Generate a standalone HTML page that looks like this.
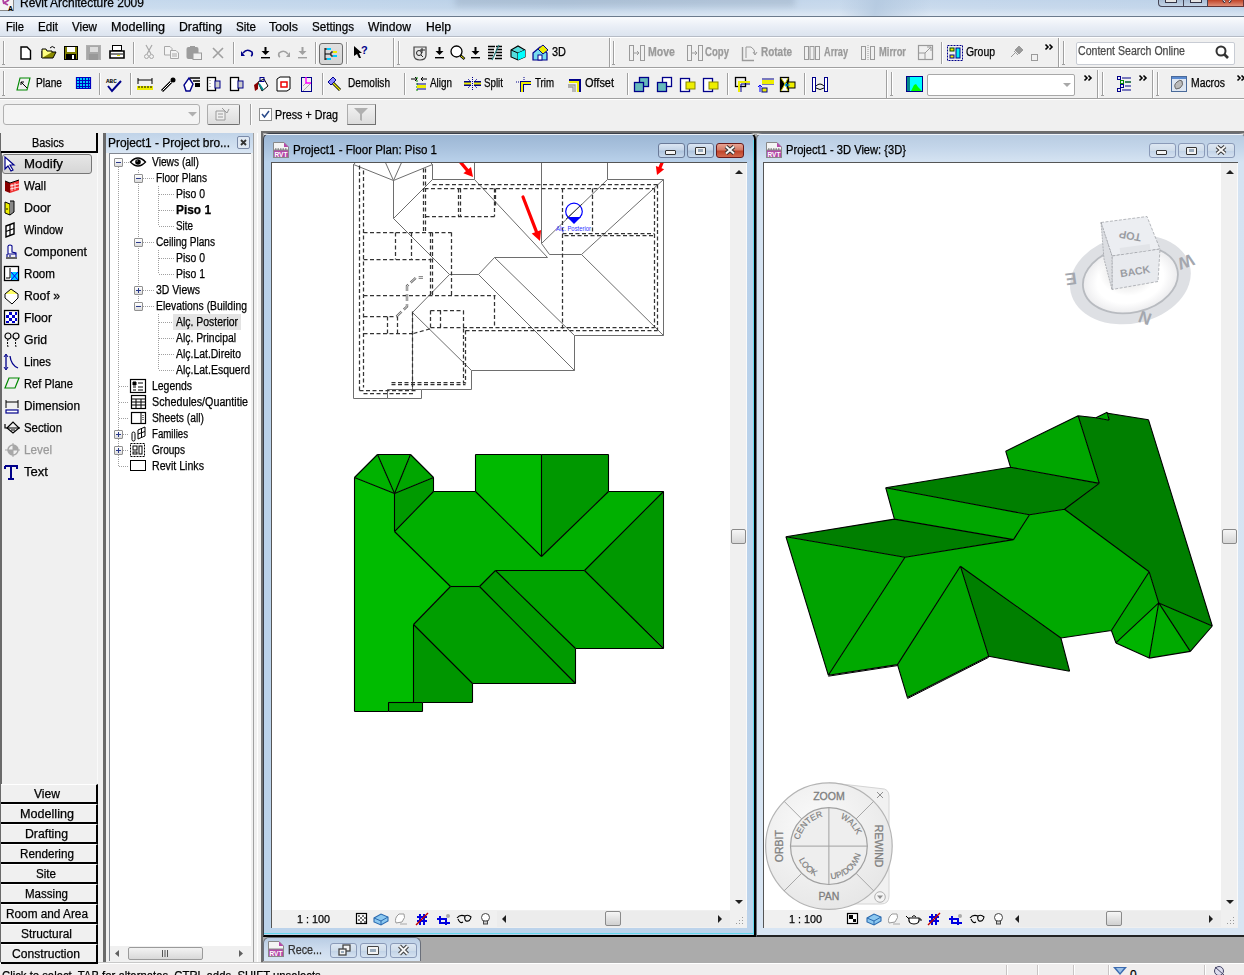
<!DOCTYPE html>
<html><head><meta charset="utf-8">
<style>
*{box-sizing:border-box;margin:0;padding:0}
html,body{width:1244px;height:975px;overflow:hidden;background:#f0f0f0;font-family:"Liberation Sans",sans-serif;font-size:12px;color:#000;position:relative}
.a{position:absolute}
.t{position:absolute;white-space:nowrap;line-height:14px;-webkit-text-stroke:0.25px currentColor}
svg{position:absolute;overflow:visible}
</style></head><body>
<div class="a" style="left:0px;top:0px;width:1244px;height:16px;background:linear-gradient(90deg,#c9dbee 0%,#bfd4ea 30%,#b9cfe6 45%,#c6d8ec 70%,#bcd1e8 100%)"></div>
<div class="a" style="left:455px;top:-4px;width:340px;height:11px;background:#8a9cb0;filter:blur(3px);opacity:0.35"></div>
<div class="a" style="left:0px;top:0px;width:1244px;height:16px;background:linear-gradient(180deg,rgba(255,255,255,0) 0%,rgba(255,255,255,0.1) 50%,rgba(255,255,255,0.45) 100%)"></div>
<div class="a" style="left:840px;top:0px;width:90px;height:16px;background:linear-gradient(100deg,transparent 0%,#aec4dc 40%,transparent 100%);opacity:0.7"></div>
<div class="t" style="left:20px;top:-4px;font-size:12px;color:#000;font-weight:normal;transform-origin:0 50%;transform:scaleX(0.999);">Revit Architecture 2009</div>
<div class="a" style="left:0px;top:0px;width:14px;height:11px;background:#f4f4f4;border-right:1px solid #888;border-bottom:1px solid #888"></div>
<svg style="left:0px;top:0px;" width="14" height="11" viewBox="0 0 14 11"><path d="M3 0 L4 4 M4 3 L9 0 M4 3 L8 5" stroke="#b040a0" stroke-width="1.8"/><text x="8" y="10.5" font-size="7" font-family="Liberation Sans" font-weight="bold">A</text></svg>
<div class="a" style="left:1158px;top:0px;width:26px;height:7px;background:linear-gradient(#a8bcd4,#c4d4e6);border:1px solid #445;border-top:none;border-radius:0 0 0 4px"></div>
<div class="a" style="left:1184px;top:0px;width:24px;height:7px;background:linear-gradient(#a8bcd4,#c4d4e6);border:1px solid #445;border-top:none;border-left:none"></div>
<div class="a" style="left:1208px;top:0px;width:36px;height:7px;background:linear-gradient(#c04428,#e0907a);border:1px solid #633;border-top:none;border-left:none"></div>
<div class="a" style="left:1165px;top:0px;width:12px;height:3px;background:#e4e4e4;border:1px solid #334;border-top:none;border-radius:0 0 1px 1px"></div>
<div class="a" style="left:1190px;top:0px;width:12px;height:3px;background:#e4e4e4;border:1px solid #334;border-top:none"></div>
<svg style="left:1222px;top:0px;" width="10" height="3" viewBox="0 0 10 3"><path d="M1 0 L3 2.5 M9 0 L7 2.5" stroke="#334" stroke-width="2.2"/><path d="M1.5 0 L3 2 M8.5 0 L7 2" stroke="#fff" stroke-width="1"/></svg>
<div class="a" style="left:0px;top:16px;width:1244px;height:1px;background:#6b7a8c"></div>
<div class="a" style="left:0px;top:17px;width:1244px;height:19px;background:linear-gradient(180deg,#fafbfd 0%,#e9eef6 50%,#dce4ef 100%)"></div>
<div class="a" style="left:0px;top:36px;width:1244px;height:1px;background:#b6bcc6"></div>
<div class="t" style="left:6px;top:20px;font-size:12px;color:#000;font-weight:normal;transform-origin:0 50%;transform:scaleX(0.931);">File</div>
<div class="t" style="left:38px;top:20px;font-size:12px;color:#000;font-weight:normal;transform-origin:0 50%;transform:scaleX(0.967);">Edit</div>
<div class="t" style="left:72px;top:20px;font-size:12px;color:#000;font-weight:normal;transform-origin:0 50%;transform:scaleX(0.969);">View</div>
<div class="t" style="left:111px;top:20px;font-size:12px;color:#000;font-weight:normal;transform-origin:0 50%;transform:scaleX(1.051);">Modelling</div>
<div class="t" style="left:179px;top:20px;font-size:12px;color:#000;font-weight:normal;transform-origin:0 50%;transform:scaleX(1.023);">Drafting</div>
<div class="t" style="left:236px;top:20px;font-size:12px;color:#000;font-weight:normal;transform-origin:0 50%;transform:scaleX(0.967);">Site</div>
<div class="t" style="left:269px;top:20px;font-size:12px;color:#000;font-weight:normal;transform-origin:0 50%;transform:scaleX(1.035);">Tools</div>
<div class="t" style="left:312px;top:20px;font-size:12px;color:#000;font-weight:normal;transform-origin:0 50%;transform:scaleX(0.969);">Settings</div>
<div class="t" style="left:368px;top:20px;font-size:12px;color:#000;font-weight:normal;transform-origin:0 50%;transform:scaleX(1.007);">Window</div>
<div class="t" style="left:426px;top:20px;font-size:12px;color:#000;font-weight:normal;transform-origin:0 50%;transform:scaleX(1.013);">Help</div>
<div class="a" style="left:0px;top:37px;width:1244px;height:1px;background:#fff"></div>
<div class="a" style="left:0px;top:67px;width:1244px;height:1px;background:#a0a0a0"></div>
<div class="a" style="left:0px;top:68px;width:1244px;height:1px;background:#fff"></div>
<div class="a" style="left:0px;top:98px;width:1244px;height:1px;background:#a0a0a0"></div>
<div class="a" style="left:0px;top:99px;width:1244px;height:1px;background:#fff"></div>
<div class="a" style="left:0px;top:962px;width:1244px;height:1px;background:#c8c8c8"></div>
<div class="a" style="left:0px;top:963px;width:1244px;height:1px;background:#ffffff"></div>
<div class="a" style="left:0px;top:964px;width:1244px;height:11px;background:#f0eeee"></div>
<div class="a" style="left:1006px;top:965px;width:1px;height:10px;background:#c8c4c4"></div>
<div class="a" style="left:1007px;top:965px;width:1px;height:10px;background:#fff"></div>
<div class="a" style="left:1037px;top:965px;width:1px;height:10px;background:#c8c4c4"></div>
<div class="a" style="left:1038px;top:965px;width:1px;height:10px;background:#fff"></div>
<div class="a" style="left:1073px;top:965px;width:1px;height:10px;background:#c8c4c4"></div>
<div class="a" style="left:1074px;top:965px;width:1px;height:10px;background:#fff"></div>
<div class="a" style="left:1108px;top:965px;width:1px;height:10px;background:#c8c4c4"></div>
<div class="a" style="left:1109px;top:965px;width:1px;height:10px;background:#fff"></div>
<div class="a" style="left:1204px;top:965px;width:1px;height:10px;background:#c8c4c4"></div>
<div class="a" style="left:1205px;top:965px;width:1px;height:10px;background:#fff"></div>
<svg style="left:1113px;top:967px;" width="15" height="8" viewBox="0 0 15 8"><path d="M0 0 H14 L7 8 Z" fill="#3a6ab0"/><path d="M3 1 H11 L7 6 Z" fill="#9ac0e8"/></svg>
<div class="t" style="left:1130px;top:968px;font-size:12px;color:#000;font-weight:normal;">0</div>
<svg style="left:1214px;top:966px;" width="11" height="9" viewBox="0 0 11 9"><circle cx="5" cy="5" r="4.5" fill="#dde" stroke="#446"/><path d="M1 1 L10 9" stroke="#446"/></svg>
<div class="t" style="left:2px;top:969px;font-size:12px;color:#000;font-weight:normal;transform-origin:0 50%;transform:scaleX(0.942);">Click to select, TAB for alternates, CTRL adds, SHIFT unselects.</div>
<div class="a" style="left:3px;top:41px;width:1px;height:24px;background:#a0a0a0"></div>
<div class="a" style="left:4px;top:41px;width:1px;height:24px;background:#fff"></div>
<div class="a" style="left:2px;top:64px;width:3px;height:1px;background:#a0a0a0"></div>
<svg style="left:20px;top:46px;" width="12" height="14" viewBox="0 0 12 14"><path d="M1 1 H7 L10.5 4.5 V13 H1 Z" fill="#fff" stroke="#000" stroke-width="1.4"/></svg>
<svg style="left:41px;top:45px;" width="16" height="15" viewBox="0 0 16 15"><path d="M1 6 V13 H12 L15 7 H4 L1 13" fill="#8a8a00" stroke="#000" stroke-width="1"/><path d="M1 13 V4 H5 L6 6 H11 V7" fill="#ffff80" stroke="#000" stroke-width="1"/><path d="M9 3 Q11 0 14 3" stroke="#000" fill="none"/></svg>
<svg style="left:64px;top:46px;" width="14" height="14" viewBox="0 0 14 14"><rect x="0.5" y="0.5" width="13" height="13" fill="#808000" stroke="#000"/><rect x="3" y="1" width="8" height="5" fill="#fff"/><rect x="2" y="8" width="10" height="6" fill="#000"/><rect x="8" y="9" width="2" height="4" fill="#fff"/></svg>
<svg style="left:86px;top:45px;" width="16" height="16" viewBox="0 0 16 16"><rect x="0.5" y="0.5" width="14" height="14" fill="#a8a8a8" stroke="#b0b0b0"/><rect x="4" y="2" width="8" height="5" fill="#ddd"/><rect x="3" y="9" width="9" height="6" fill="#999"/></svg>
<svg style="left:109px;top:45px;" width="16" height="15" viewBox="0 0 16 15"><rect x="3.5" y="0.5" width="9" height="5" fill="#fff" stroke="#000"/><path d="M1 6 H15 V13 H1 Z" fill="#fff" stroke="#000" stroke-width="1.6"/><path d="M2 9 H14" stroke="#000"/><rect x="8" y="10" width="3" height="1" fill="#dd0"/></svg>
<div class="a" style="left:133px;top:42px;width:1px;height:22px;background:#a0a0a0"></div>
<div class="a" style="left:134px;top:42px;width:1px;height:22px;background:#fff"></div>
<svg style="left:144px;top:45px;" width="10" height="15" viewBox="0 0 10 15"><path d="M2 0 L7 9 M8 0 L3 9" stroke="#a8a8a8" stroke-width="1.2"/><circle cx="2.5" cy="11.5" r="2" fill="none" stroke="#a8a8a8"/><circle cx="7.5" cy="11.5" r="2" fill="none" stroke="#a8a8a8"/></svg>
<svg style="left:164px;top:46px;" width="15" height="13" viewBox="0 0 15 13"><path d="M0.5 0.5 H6 L8 2.5 V9 H0.5 Z" fill="#f4f4f4" stroke="#a8a8a8"/><path d="M6.5 4.5 H12 L14.5 7 V12.5 H6.5 Z" fill="#f4f4f4" stroke="#a8a8a8"/><path d="M8 8 H13 M8 10 H13" stroke="#a8a8a8"/></svg>
<svg style="left:186px;top:45px;" width="16" height="15" viewBox="0 0 16 15"><rect x="0.5" y="2" width="12" height="12" rx="2" fill="#9c9c9c"/><rect x="7" y="8" width="8.5" height="6.5" fill="#f0f0f0" stroke="#9c9c9c"/><rect x="4" y="1" width="5" height="3" fill="#9c9c9c"/></svg>
<svg style="left:212px;top:47px;" width="12" height="12" viewBox="0 0 12 12"><path d="M1 1 L11 11 M11 1 L1 11" stroke="#a0a0a0" stroke-width="1.6"/></svg>
<div class="a" style="left:233px;top:42px;width:1px;height:22px;background:#a0a0a0"></div>
<div class="a" style="left:234px;top:42px;width:1px;height:22px;background:#fff"></div>
<svg style="left:241px;top:48px;" width="13" height="9" viewBox="0 0 13 9"><path d="M2 5 Q6 0 11 4 Q12 7 10 8" stroke="#00008a" stroke-width="1.6" fill="none"/><path d="M0 3 L4 8 L0 8 Z" fill="#00008a"/></svg>
<svg style="left:261px;top:47px;" width="9" height="11" viewBox="0 0 9 11"><path d="M4.5 0 V6" stroke="#000" stroke-width="2"/><path d="M0.5 4 L4.5 8 L8.5 4 Z" fill="#000"/><rect x="0" y="10" width="9" height="1.4" fill="#000"/></svg>
<svg style="left:278px;top:49px;" width="12" height="8" viewBox="0 0 12 8"><path d="M10 5 Q6 0 1 4 Q0 7 2 8" stroke="#a0a0a0" stroke-width="1.6" fill="none"/><path d="M12 3 L8 8 L12 8 Z" fill="#a0a0a0"/></svg>
<svg style="left:298px;top:47px;" width="9" height="11" viewBox="0 0 9 11"><path d="M4.5 0 V6" stroke="#a0a0a0" stroke-width="2"/><path d="M0.5 4 L4.5 8 L8.5 4 Z" fill="#a0a0a0"/><rect x="0" y="10" width="9" height="1.4" fill="#a0a0a0"/></svg>
<div class="a" style="left:315px;top:42px;width:1px;height:22px;background:#a0a0a0"></div>
<div class="a" style="left:316px;top:42px;width:1px;height:22px;background:#fff"></div>
<div class="a" style="left:319px;top:43px;width:24px;height:22px;background:linear-gradient(#e0e0e0,#d4d4d4);border:1px solid #6d6d6d;border-radius:3px"></div>
<svg style="left:323px;top:47px;" width="16" height="14" viewBox="0 0 16 14"><path d="M2 1 V13 M2 2 H6 M2 7 H8 M2 12 H6 M8 5 V9 M8 5 H10 M8 9 H10" stroke="#000" fill="none"/><rect x="4" y="1" width="4" height="2" fill="#0cf"/><rect x="10" y="4" width="4" height="2" fill="#ee0"/><rect x="10" y="8" width="4" height="2" fill="#0cf"/><rect x="4" y="11" width="4" height="2" fill="#0cf"/></svg>
<div class="a" style="left:346px;top:42px;width:1px;height:22px;background:#a0a0a0"></div>
<div class="a" style="left:347px;top:42px;width:1px;height:22px;background:#fff"></div>
<svg style="left:354px;top:45px;" width="16" height="14" viewBox="0 0 16 14"><path d="M0 1 L8 8 L5 8 L7 13 L5 13 L3 9 L0 11 Z" fill="#000"/><text x="7" y="9" font-size="11" font-weight="bold" fill="#00008a" font-family="Liberation Sans">?</text></svg>
<div class="a" style="left:393px;top:38px;width:1px;height:29px;background:#a0a0a0"></div>
<div class="a" style="left:394px;top:38px;width:1px;height:29px;background:#fff"></div>
<div class="a" style="left:398px;top:41px;width:1px;height:24px;background:#a0a0a0"></div>
<div class="a" style="left:399px;top:41px;width:1px;height:24px;background:#fff"></div>
<div class="a" style="left:397px;top:64px;width:3px;height:1px;background:#a0a0a0"></div>
<svg style="left:412px;top:45px;" width="16" height="16" viewBox="0 0 16 16"><path d="M2 2 H14 V10 Q14 15 8 15 Q2 15 2 10 Z" fill="#e8e8e8" stroke="#444" stroke-width="1.2"/><circle cx="7" cy="8" r="2.5" fill="none" stroke="#222"/><path d="M9 10 L11 12 M10 3 V8 M8 5 H13" stroke="#222"/></svg>
<svg style="left:435px;top:47px;" width="9" height="11" viewBox="0 0 9 11"><path d="M4.5 0 V6" stroke="#000" stroke-width="2"/><path d="M0.5 4 L4.5 8 L8.5 4 Z" fill="#000"/><rect x="0" y="10" width="9" height="1.4" fill="#000"/></svg>
<svg style="left:450px;top:45px;" width="16" height="15" viewBox="0 0 16 15"><circle cx="6.5" cy="6.5" r="5.5" fill="#fff" stroke="#000" stroke-width="1.3"/><path d="M10.5 10.5 L14.5 14" stroke="#000" stroke-width="2.4"/><path d="M11 11 L14 13.5" stroke="#ee0" stroke-width="1"/></svg>
<svg style="left:471px;top:47px;" width="9" height="11" viewBox="0 0 9 11"><path d="M4.5 0 V6" stroke="#000" stroke-width="2"/><path d="M0.5 4 L4.5 8 L8.5 4 Z" fill="#000"/><rect x="0" y="10" width="9" height="1.4" fill="#000"/></svg>
<svg style="left:488px;top:45px;" width="15" height="15" viewBox="0 0 15 15"><path d="M0 1.5 H7 M0 4.5 H6 M0 7.5 H6 M0 10.5 H5 M0 13.5 H5 M8 1.5 H14 M8 4.5 H14 M8 7.5 H14 M8 10.5 H14 M7 13.5 H14" stroke="#000" stroke-width="1.4"/><path d="M11 0 L4 15" stroke="#2a8080" stroke-width="1.2"/></svg>
<svg style="left:510px;top:45px;" width="16" height="16" viewBox="0 0 16 16"><path d="M1 5 L8 1 L15 5 V12 L8 15 L1 12 Z" fill="#5dd" stroke="#000" stroke-width="1.1"/><path d="M1 5 L8 8 L15 5 M8 8 V15" stroke="#000" fill="none"/><path d="M8 8 L15 5 V12 L8 15 Z" fill="#0ff"/></svg>
<svg style="left:532px;top:45px;" width="17" height="16" viewBox="0 0 17 16"><path d="M1 8 L8 2 L15 8 V15 H1 Z" fill="#7de" stroke="#00008a" stroke-width="1.2"/><path d="M6 4 L11 0 L16 5 L11 9 Z" fill="#ee0" stroke="#00008a"/><rect x="6" y="10" width="4" height="5" fill="#fff" stroke="#00008a"/></svg>
<div class="t" style="left:552px;top:45px;font-size:12px;color:#000;font-weight:normal;transform-origin:0 50%;transform:scaleX(0.912);">3D</div>
<div class="a" style="left:609px;top:38px;width:1px;height:29px;background:#a0a0a0"></div>
<div class="a" style="left:610px;top:38px;width:1px;height:29px;background:#fff"></div>
<div class="a" style="left:613px;top:41px;width:1px;height:24px;background:#a0a0a0"></div>
<div class="a" style="left:614px;top:41px;width:1px;height:24px;background:#fff"></div>
<div class="a" style="left:612px;top:64px;width:3px;height:1px;background:#a0a0a0"></div>
<svg style="left:629px;top:45px;" width="16" height="16" viewBox="0 0 16 16"><rect x="0.5" y="0.5" width="4" height="15" fill="none" stroke="#9a9a9a"/><rect x="11.5" y="0.5" width="4" height="15" fill="none" stroke="#9a9a9a"/><path d="M5 8 H10 M8 6 L10 8 L8 10" stroke="#9a9a9a" fill="none"/></svg>
<div class="t" style="left:648px;top:45px;font-size:12px;color:#9a9a9a;font-weight:bold;transform-origin:0 50%;transform:scaleX(0.880);">Move</div>
<svg style="left:687px;top:45px;" width="16" height="16" viewBox="0 0 16 16"><rect x="0.5" y="0.5" width="4" height="15" fill="none" stroke="#9a9a9a"/><rect x="11.5" y="0.5" width="4" height="15" fill="none" stroke="#9a9a9a"/><path d="M5 8 H10 M8 6 L10 8 L8 10" stroke="#9a9a9a" fill="none"/></svg>
<div class="t" style="left:705px;top:45px;font-size:12px;color:#9a9a9a;font-weight:bold;transform-origin:0 50%;transform:scaleX(0.800);">Copy</div>
<svg style="left:742px;top:45px;" width="15" height="16" viewBox="0 0 15 16"><path d="M0.5 2 V15.5 H12" stroke="#9a9a9a" fill="none" stroke-width="1.4"/><path d="M4 13 V2 H9 Q13 4 13 9 M11 7 L13 10 L15 7" stroke="#9a9a9a" fill="none"/></svg>
<div class="t" style="left:761px;top:45px;font-size:12px;color:#9a9a9a;font-weight:bold;transform-origin:0 50%;transform:scaleX(0.830);">Rotate</div>
<svg style="left:804px;top:45px;" width="16" height="16" viewBox="0 0 16 16"><rect x="0.5" y="1.5" width="4" height="13" fill="none" stroke="#9a9a9a"/><rect x="6" y="1.5" width="4" height="13" fill="none" stroke="#9a9a9a"/><rect x="11.5" y="1.5" width="4" height="13" fill="none" stroke="#9a9a9a"/></svg>
<div class="t" style="left:824px;top:45px;font-size:12px;color:#9a9a9a;font-weight:bold;transform-origin:0 50%;transform:scaleX(0.765);">Array</div>
<svg style="left:861px;top:45px;" width="14" height="16" viewBox="0 0 14 16"><rect x="0.5" y="1.5" width="4" height="13" fill="none" stroke="#9a9a9a"/><rect x="9.5" y="1.5" width="4" height="13" fill="none" stroke="#9a9a9a"/><path d="M7 0 V16" stroke="#9a9a9a" stroke-dasharray="1 1"/></svg>
<div class="t" style="left:879px;top:45px;font-size:12px;color:#9a9a9a;font-weight:bold;transform-origin:0 50%;transform:scaleX(0.779);">Mirror</div>
<svg style="left:918px;top:45px;" width="15" height="15" viewBox="0 0 15 15"><rect x="0.5" y="0.5" width="14" height="14" fill="none" stroke="#9a9a9a" stroke-width="1.2"/><path d="M0.5 8 H7 V14.5 M7 8 L13 2 M9 2 H13 V6" stroke="#9a9a9a" fill="none"/></svg>
<div class="a" style="left:941px;top:42px;width:1px;height:22px;background:#a0a0a0"></div>
<div class="a" style="left:942px;top:42px;width:1px;height:22px;background:#fff"></div>
<svg style="left:947px;top:45px;" width="16" height="16" viewBox="0 0 16 16"><rect x="0.5" y="0.5" width="15" height="15" fill="none" stroke="#00008a" stroke-dasharray="2 1"/><rect x="3" y="3" width="4" height="3" fill="#ee0" stroke="#040"/><rect x="3" y="10" width="4" height="3" fill="#ee0" stroke="#00008a"/><rect x="9" y="3" width="4" height="10" fill="#0ee" stroke="#00008a"/></svg>
<div class="t" style="left:966px;top:45px;font-size:12px;color:#000;font-weight:normal;transform-origin:0 50%;transform:scaleX(0.869);">Group</div>
<svg style="left:1010px;top:45px;" width="14" height="13" viewBox="0 0 14 13"><path d="M1 12 L6 7" stroke="#9a9a9a"/><path d="M5 5 L9 1 L13 5 L9 9 Z M4 6 L8 10" stroke="#9a9a9a" fill="#9a9a9a"/></svg>
<div class="a" style="left:1031px;top:54px;width:7px;height:7px;background:#f0f0f0;border:1px solid #9a9a9a"></div>
<svg style="left:1045px;top:44px;" width="9" height="6" viewBox="0 0 9 6"><path d="M0.5 0.5 L3 3 L0.5 5.5 M4.5 0.5 L7 3 L4.5 5.5" stroke="#000" stroke-width="1.6" fill="none"/></svg>
<div class="a" style="left:1058px;top:38px;width:1px;height:29px;background:#a0a0a0"></div>
<div class="a" style="left:1059px;top:38px;width:1px;height:29px;background:#fff"></div>
<div class="a" style="left:1063px;top:41px;width:1px;height:24px;background:#a0a0a0"></div>
<div class="a" style="left:1064px;top:41px;width:1px;height:24px;background:#fff"></div>
<div class="a" style="left:1062px;top:64px;width:3px;height:1px;background:#a0a0a0"></div>
<div class="a" style="left:1076px;top:42px;width:159px;height:23px;background:#fff;border:1px solid #c8ccd4;border-radius:2px"></div>
<div class="t" style="left:1078px;top:44px;font-size:12px;color:#4a4a4a;font-weight:normal;transform-origin:0 50%;transform:scaleX(0.881);">Content Search Online</div>
<svg style="left:1215px;top:45px;" width="15" height="15" viewBox="0 0 15 15"><circle cx="6" cy="6" r="4.5" fill="none" stroke="#333" stroke-width="2"/><path d="M9 9 L13 13" stroke="#333" stroke-width="2.6"/></svg>
<div class="a" style="left:3px;top:71px;width:1px;height:25px;background:#a0a0a0"></div>
<div class="a" style="left:4px;top:71px;width:1px;height:25px;background:#fff"></div>
<div class="a" style="left:2px;top:95px;width:3px;height:1px;background:#a0a0a0"></div>
<svg style="left:16px;top:77px;" width="15" height="14" viewBox="0 0 15 14"><path d="M4 1 H14 L11 13 H1 Z" fill="none" stroke="#080" stroke-width="1.1"/><path d="M5 5 L11 11 M5 5 V8 M5 5 H8" stroke="#000"/></svg>
<div class="t" style="left:36px;top:76px;font-size:12px;color:#000;font-weight:normal;transform-origin:0 50%;transform:scaleX(0.847);">Plane</div>
<svg style="left:76px;top:77px;" width="15" height="12" viewBox="0 0 15 12"><rect x="0" y="0" width="15" height="12" fill="#00e0ff"/><path d="M0.5 0 V12 M3.5 0 V12 M6.5 0 V12 M9.5 0 V12 M12.5 0 V12 M14.5 0 V12" stroke="#0000c0" stroke-width="1.2" /><path d="M0 0.5 H15 M0 3.5 H15 M0 6.5 H15 M0 9.5 H15 M0 11.5 H15" stroke="#0000c0" stroke-width="1.2"/></svg>
<div class="a" style="left:99px;top:73px;width:1px;height:22px;background:#a0a0a0"></div>
<div class="a" style="left:100px;top:73px;width:1px;height:22px;background:#fff"></div>
<svg style="left:106px;top:77px;" width="16" height="15" viewBox="0 0 16 15"><text x="0" y="6" font-size="6" font-weight="bold" font-family="Liberation Mono">ABC</text><path d="M2 9 L6 14 L15 4" stroke="#00008a" stroke-width="2" fill="none"/></svg>
<div class="a" style="left:130px;top:73px;width:1px;height:22px;background:#a0a0a0"></div>
<div class="a" style="left:131px;top:73px;width:1px;height:22px;background:#fff"></div>
<svg style="left:137px;top:77px;" width="16" height="15" viewBox="0 0 16 15"><path d="M1 1 V7 M15 1 V7 M1 3 H15" stroke="#000"/><rect x="0" y="9" width="16" height="4" fill="#ee0"/><path d="M2 9 V11 M5 9 V11 M8 9 V11 M11 9 V11 M14 9 V11" stroke="#000"/></svg>
<svg style="left:161px;top:77px;" width="15" height="15" viewBox="0 0 15 15"><path d="M1 14 L10 5" stroke="#000" stroke-width="3"/><path d="M1.5 13.5 L10 5" stroke="#fff" stroke-width="1"/><circle cx="12" cy="3" r="2.5" fill="#000"/></svg>
<svg style="left:184px;top:77px;" width="16" height="15" viewBox="0 0 16 15"><path d="M5 1 L9 7 L6 14 L2 14 L0 8 Z" fill="#fff" stroke="#00008a" stroke-width="1.4"/><path d="M6 1 H16 M9 4 H16" stroke="#000" stroke-width="1.5"/><rect x="11" y="6" width="5" height="4" fill="#000"/></svg>
<svg style="left:207px;top:77px;" width="14" height="15" viewBox="0 0 14 15"><rect x="0.5" y="0.5" width="8" height="13" fill="#fff" stroke="#000" stroke-width="1.3"/><rect x="8" y="4" width="5" height="7" fill="#ccc" stroke="#00008a"/><path d="M3 3 V11" stroke="#777" stroke-dasharray="1 2"/></svg>
<svg style="left:230px;top:77px;" width="14" height="15" viewBox="0 0 14 15"><rect x="0.5" y="0.5" width="8" height="13" fill="#fff" stroke="#000" stroke-width="1.3"/><rect x="8" y="4" width="5" height="7" fill="#ccc" stroke="#00008a"/></svg>
<svg style="left:253px;top:77px;" width="16" height="15" viewBox="0 0 16 15"><path d="M5 5 L11 2 L15 9 L9 14 Z" fill="#fff" stroke="#000"/><path d="M6 7 L10 13" stroke="#088" stroke-width="2"/><path d="M1 8 L5 5 V12 L2 14 Z" fill="#800"/><rect x="7" y="0.5" width="4" height="4" fill="none" stroke="#00008a"/></svg>
<svg style="left:276px;top:77px;" width="15" height="15" viewBox="0 0 15 15"><path d="M1 2 L4 0 H14 V12 L11 14 H1 Z" fill="#fff" stroke="#000"/><rect x="5" y="5" width="6" height="5" fill="none" stroke="#e00" stroke-width="1.5"/></svg>
<svg style="left:301px;top:77px;" width="11" height="15" viewBox="0 0 11 15"><rect x="0.5" y="0.5" width="10" height="14" fill="none" stroke="#00008a"/><path d="M2 14 L10 6 M2 9 L6 5" stroke="#aaa"/><path d="M5 0 V6 H10" stroke="#f0f" stroke-width="1.4" fill="none"/></svg>
<div class="a" style="left:322px;top:73px;width:1px;height:22px;background:#a0a0a0"></div>
<div class="a" style="left:323px;top:73px;width:1px;height:22px;background:#fff"></div>
<svg style="left:328px;top:77px;" width="14" height="14" viewBox="0 0 14 14"><path d="M3 4 L8 9 L12 13" stroke="#000" stroke-width="3"/><path d="M4 5 L12 13" stroke="#ee0" stroke-width="1.2"/><path d="M0 5 L5 0 L8 3 L3 8 Z" fill="#88f" stroke="#00008a"/></svg>
<div class="t" style="left:348px;top:76px;font-size:12px;color:#000;font-weight:normal;transform-origin:0 50%;transform:scaleX(0.840);">Demolish</div>
<div class="a" style="left:404px;top:73px;width:1px;height:22px;background:#a0a0a0"></div>
<div class="a" style="left:405px;top:73px;width:1px;height:22px;background:#fff"></div>
<svg style="left:411px;top:77px;" width="16" height="15" viewBox="0 0 16 15"><path d="M0 2 H6 M10 2 H16 M4 0 L6 2 L4 4 M12 0 L10 2 L12 4" stroke="#000" fill="none"/><path d="M6 0 V15" stroke="#080" stroke-dasharray="2 1"/><rect x="6" y="8" width="9" height="3" fill="#ee0"/><path d="M6 7 H15 M6 12 H15" stroke="#00008a"/></svg>
<div class="t" style="left:430px;top:76px;font-size:12px;color:#000;font-weight:normal;transform-origin:0 50%;transform:scaleX(0.824);">Align</div>
<svg style="left:464px;top:77px;" width="17" height="14" viewBox="0 0 17 14"><path d="M0 6.5 H7 M10 6.5 H17" stroke="#00008a" stroke-width="5"/><path d="M0 6.5 H7 M10 6.5 H17" stroke="#ee0" stroke-width="2"/><path d="M8.5 0 V14 M4 2 L7 5 M13 2 L10 5 M4 11 L7 8 M13 11 L10 8" stroke="#00008a" stroke-dasharray="1 1"/></svg>
<div class="t" style="left:484px;top:76px;font-size:12px;color:#000;font-weight:normal;transform-origin:0 50%;transform:scaleX(0.814);">Split</div>
<svg style="left:516px;top:77px;" width="16" height="15" viewBox="0 0 16 15"><path d="M0 5 H6 M8 0 V5" stroke="#00008a" stroke-dasharray="1 1"/><path d="M6 15 V6 H15" stroke="#00008a" stroke-width="4" fill="none"/><path d="M6 15 V6 H15" stroke="#ee0" stroke-width="2" fill="none"/></svg>
<div class="t" style="left:535px;top:76px;font-size:12px;color:#000;font-weight:normal;transform-origin:0 50%;transform:scaleX(0.807);">Trim</div>
<svg style="left:567px;top:77px;" width="15" height="15" viewBox="0 0 15 15"><path d="M2 3 H13 V15" stroke="#00008a" stroke-width="2" fill="none"/><path d="M2 5 H11 V15" stroke="#ee0" stroke-width="2" fill="none"/><path d="M1 8 H8 V15 M1 10 H6 V15" stroke="#999" stroke-width="1.3" fill="none"/></svg>
<div class="t" style="left:585px;top:76px;font-size:12px;color:#000;font-weight:normal;transform-origin:0 50%;transform:scaleX(0.912);">Offset</div>
<div class="a" style="left:627px;top:73px;width:1px;height:22px;background:#a0a0a0"></div>
<div class="a" style="left:628px;top:73px;width:1px;height:22px;background:#fff"></div>
<svg style="left:634px;top:77px;" width="16" height="15" viewBox="0 0 16 15"><rect x="5.5" y="0.5" width="9" height="9" fill="#6bb" stroke="#00008a" stroke-width="1.3"/><rect x="0.5" y="5.5" width="9" height="9" fill="#6bb" stroke="#00008a" stroke-width="1.3"/></svg>
<svg style="left:657px;top:77px;" width="16" height="15" viewBox="0 0 16 15"><rect x="5.5" y="0.5" width="9" height="9" fill="#fff" stroke="#00008a" stroke-width="1.3"/><rect x="0.5" y="5.5" width="9" height="9" fill="#6bb" stroke="#00008a" stroke-width="1.3"/></svg>
<svg style="left:680px;top:77px;" width="16" height="15" viewBox="0 0 16 15"><rect x="0.5" y="1.5" width="9" height="13" fill="#fff" stroke="#00008a" stroke-width="1.3"/><rect x="6" y="5" width="9" height="7" fill="#ee0" stroke="#880" /></svg>
<svg style="left:703px;top:77px;" width="16" height="15" viewBox="0 0 16 15"><rect x="0.5" y="1.5" width="9" height="13" fill="#fff" stroke="#00008a" stroke-width="1.3"/><rect x="6" y="5" width="9" height="7" fill="#ee0" stroke="#880" /></svg>
<div class="a" style="left:727px;top:73px;width:1px;height:22px;background:#a0a0a0"></div>
<div class="a" style="left:728px;top:73px;width:1px;height:22px;background:#fff"></div>
<svg style="left:735px;top:77px;" width="15" height="15" viewBox="0 0 15 15"><rect x="0.5" y="0.5" width="10" height="9" fill="none" stroke="#000" stroke-width="1.3"/><path d="M4 15 V5 H15" stroke="#ee0" stroke-width="2" fill="none"/><path d="M6 15 V7 H15" stroke="#00008a" fill="none"/></svg>
<svg style="left:758px;top:76px;" width="16" height="16" viewBox="0 0 16 16"><path d="M4 3 H16 M4 8 H16" stroke="#00008a"/><rect x="4" y="4" width="12" height="4" fill="#ee0"/><path d="M2 9 V16 M0 11 L2 9 L4 11" stroke="#00f" fill="none"/><rect x="4" y="12" width="5" height="4" fill="#ee0" stroke="#00008a"/></svg>
<svg style="left:780px;top:77px;" width="16" height="15" viewBox="0 0 16 15"><rect x="0.5" y="0.5" width="8" height="14" fill="#fff" stroke="#000" stroke-width="1.3"/><path d="M1 1 L5 7 L1 14 M8 1 L5 7 L8 14" stroke="#cc0"/><rect x="8" y="5" width="7" height="6" fill="#ee0" stroke="#000"/><path d="M5 8 H10 M7 6 L5 8 L7 10" stroke="#0af" fill="none"/></svg>
<div class="a" style="left:804px;top:73px;width:1px;height:22px;background:#a0a0a0"></div>
<div class="a" style="left:805px;top:73px;width:1px;height:22px;background:#fff"></div>
<svg style="left:812px;top:77px;" width="16" height="15" viewBox="0 0 16 15"><rect x="0.5" y="0.5" width="3" height="14" fill="#fff" stroke="#00008a"/><rect x="12.5" y="0.5" width="3" height="14" fill="#fff" stroke="#00008a"/><path d="M4 9 Q8 5 12 9 M4 11 Q8 14 12 11" stroke="#000" fill="none"/></svg>
<div class="a" style="left:886px;top:70px;width:1px;height:28px;background:#a0a0a0"></div>
<div class="a" style="left:887px;top:70px;width:1px;height:28px;background:#fff"></div>
<div class="a" style="left:891px;top:72px;width:1px;height:24px;background:#a0a0a0"></div>
<div class="a" style="left:892px;top:72px;width:1px;height:24px;background:#fff"></div>
<div class="a" style="left:890px;top:95px;width:3px;height:1px;background:#a0a0a0"></div>
<svg style="left:906px;top:76px;" width="17" height="16" viewBox="0 0 17 16"><rect x="0.5" y="0.5" width="16" height="15" fill="#0ff" stroke="#00008a"/><rect x="1" y="1" width="3" height="14" fill="#088"/><path d="M5 15 L8 9 L10 8 L12 11 L16 15 Z" fill="#0f0"/></svg>
<div class="a" style="left:927px;top:74px;width:148px;height:22px;background:#fff;border:1px solid #a8a8a8;border-radius:2px"></div>
<svg style="left:1063px;top:83px;" width="8" height="5" viewBox="0 0 8 5"><path d="M0 0 H8 L4 4 Z" fill="#a8a8a8"/></svg>
<svg style="left:1084px;top:75px;" width="9" height="6" viewBox="0 0 9 6"><path d="M0.5 0.5 L3 3 L0.5 5.5 M4.5 0.5 L7 3 L4.5 5.5" stroke="#000" stroke-width="1.6" fill="none"/></svg>
<div class="a" style="left:1097px;top:70px;width:1px;height:28px;background:#a0a0a0"></div>
<div class="a" style="left:1098px;top:70px;width:1px;height:28px;background:#fff"></div>
<div class="a" style="left:1102px;top:72px;width:1px;height:24px;background:#a0a0a0"></div>
<div class="a" style="left:1103px;top:72px;width:1px;height:24px;background:#fff"></div>
<div class="a" style="left:1101px;top:95px;width:3px;height:1px;background:#a0a0a0"></div>
<svg style="left:1117px;top:76px;" width="15" height="15" viewBox="0 0 15 15"><rect x="0.5" y="0.5" width="3" height="3" fill="none" stroke="#00008a"/><rect x="3.5" y="4.5" width="3" height="3" fill="none" stroke="#080"/><rect x="3.5" y="8.5" width="3" height="3" fill="none" stroke="#00008a"/><rect x="0.5" y="12.5" width="3" height="3" fill="none" stroke="#00008a"/><path d="M5 2 H14 M8 6 H14 M8 10 H14 M5 14 H14" stroke="#00008a"/><path d="M8 6 H14" stroke="#080"/></svg>
<svg style="left:1139px;top:75px;" width="9" height="6" viewBox="0 0 9 6"><path d="M0.5 0.5 L3 3 L0.5 5.5 M4.5 0.5 L7 3 L4.5 5.5" stroke="#000" stroke-width="1.6" fill="none"/></svg>
<div class="a" style="left:1152px;top:70px;width:1px;height:28px;background:#a0a0a0"></div>
<div class="a" style="left:1153px;top:70px;width:1px;height:28px;background:#fff"></div>
<div class="a" style="left:1157px;top:72px;width:1px;height:24px;background:#a0a0a0"></div>
<div class="a" style="left:1158px;top:72px;width:1px;height:24px;background:#fff"></div>
<div class="a" style="left:1156px;top:95px;width:3px;height:1px;background:#a0a0a0"></div>
<svg style="left:1171px;top:76px;" width="16" height="16" viewBox="0 0 16 16"><rect x="0.5" y="0.5" width="15" height="15" fill="#dde6f2" stroke="#4a6a9a"/><rect x="1" y="1" width="14" height="2" fill="#5a8ad0"/><path d="M5 13 Q2 9 6 6 Q9 3 11 5 Q13 9 9 12 Z" fill="#bbb" stroke="#666"/></svg>
<div class="t" style="left:1191px;top:76px;font-size:12px;color:#000;font-weight:normal;transform-origin:0 50%;transform:scaleX(0.864);">Macros</div>
<svg style="left:1237px;top:75px;" width="9" height="6" viewBox="0 0 9 6"><path d="M0.5 0.5 L3 3 L0.5 5.5 M4.5 0.5 L7 3 L4.5 5.5" stroke="#000" stroke-width="1.6" fill="none"/></svg>
<div class="a" style="left:3px;top:104px;width:197px;height:21px;background:#f4f4f4;border:1px solid #b0b0b0;border-radius:3px"></div>
<svg style="left:188px;top:112px;" width="9" height="5" viewBox="0 0 9 5"><path d="M0 0 H9 L4.5 4.5 Z" fill="#b0b0b0"/></svg>
<div class="a" style="left:207px;top:104px;width:33px;height:21px;background:linear-gradient(#f2f2f2,#dcdcdc);border:1px solid #acacac;border-right-color:#707070;border-bottom-color:#707070;border-radius:2px"></div>
<svg style="left:215px;top:107px;" width="15" height="14" viewBox="0 0 15 14"><path d="M1 4 H10 V13 H1 Z" fill="#eee" stroke="#9a9a9a"/><path d="M3 7 H8 M3 10 H8" stroke="#9a9a9a"/><path d="M7 1 L12 6 L14 2" stroke="#9a9a9a" fill="none"/></svg>
<div class="a" style="left:250px;top:104px;width:1px;height:21px;background:#a0a0a0"></div>
<div class="a" style="left:251px;top:104px;width:1px;height:21px;background:#fff"></div>
<div class="a" style="left:259px;top:108px;width:13px;height:13px;background:#fff;border:1px solid #8e8f8f"></div>
<svg style="left:261px;top:110px;" width="9" height="9" viewBox="0 0 9 9"><path d="M1 4 L3.5 7 L8 1" stroke="#2a4a8a" stroke-width="1.5" fill="none"/></svg>
<div class="t" style="left:275px;top:108px;font-size:12px;color:#000;font-weight:normal;transform-origin:0 50%;transform:scaleX(0.895);">Press + Drag</div>
<div class="a" style="left:347px;top:104px;width:29px;height:21px;background:linear-gradient(#f2f2f2,#dcdcdc);border:1px solid #acacac;border-right-color:#707070;border-bottom-color:#707070"></div>
<svg style="left:354px;top:107px;" width="14" height="14" viewBox="0 0 14 14"><path d="M0 1 H14 L8 7 V14 L6 13 V7 Z" fill="#b0b0b0"/></svg>
<div class="a" style="left:0px;top:133px;width:2px;height:829px;background:#6a6a6a"></div>
<div class="a" style="left:97px;top:133px;width:1px;height:650px;background:#fafafa"></div>
<div class="a" style="left:1px;top:133px;width:97px;height:20px;background:#f0f0f0;border-right:2px solid #000;border-bottom:2px solid #000"></div>
<div class="t" style="left:32px;top:136px;font-size:12px;color:#000;font-weight:normal;transform-origin:0 50%;transform:scaleX(0.905);">Basics</div>
<div class="a" style="left:2px;top:154px;width:90px;height:20px;background:linear-gradient(#e6e6e6,#d6d6d6);border:1px solid #777;border-radius:3px"></div>
<div class="t" style="left:24px;top:157px;font-size:12px;color:#000;font-weight:normal;transform-origin:0 50%;transform:scaleX(1.103);">Modify</div>
<div class="t" style="left:24px;top:179px;font-size:12px;color:#000;font-weight:normal;transform-origin:0 50%;transform:scaleX(0.961);">Wall</div>
<div class="t" style="left:24px;top:201px;font-size:12px;color:#000;font-weight:normal;transform-origin:0 50%;transform:scaleX(1.038);">Door</div>
<div class="t" style="left:24px;top:223px;font-size:12px;color:#000;font-weight:normal;transform-origin:0 50%;transform:scaleX(0.914);">Window</div>
<div class="t" style="left:24px;top:245px;font-size:12px;color:#000;font-weight:normal;transform-origin:0 50%;transform:scaleX(1.015);">Component</div>
<div class="t" style="left:24px;top:267px;font-size:12px;color:#000;font-weight:normal;transform-origin:0 50%;transform:scaleX(0.968);">Room</div>
<div class="t" style="left:24px;top:289px;font-size:12px;color:#000;font-weight:normal;transform-origin:0 50%;transform:scaleX(1.018);">Roof &raquo;</div>
<div class="t" style="left:24px;top:311px;font-size:12px;color:#000;font-weight:normal;transform-origin:0 50%;transform:scaleX(1.024);">Floor</div>
<div class="t" style="left:24px;top:333px;font-size:12px;color:#000;font-weight:normal;transform-origin:0 50%;transform:scaleX(1.014);">Grid</div>
<div class="t" style="left:24px;top:355px;font-size:12px;color:#000;font-weight:normal;transform-origin:0 50%;transform:scaleX(0.941);">Lines</div>
<div class="t" style="left:24px;top:377px;font-size:12px;color:#000;font-weight:normal;transform-origin:0 50%;transform:scaleX(0.930);">Ref Plane</div>
<div class="t" style="left:24px;top:399px;font-size:12px;color:#000;font-weight:normal;transform-origin:0 50%;transform:scaleX(0.988);">Dimension</div>
<div class="t" style="left:24px;top:421px;font-size:12px;color:#000;font-weight:normal;transform-origin:0 50%;transform:scaleX(0.949);">Section</div>
<div class="t" style="left:24px;top:443px;font-size:12px;color:#9a9a9a;font-weight:normal;transform-origin:0 50%;transform:scaleX(0.976);">Level</div>
<div class="t" style="left:24px;top:465px;font-size:12px;color:#000;font-weight:normal;transform-origin:0 50%;transform:scaleX(1.090);">Text</div>
<svg style="left:4px;top:156px;" width="16" height="16" viewBox="0 0 16 16"><path d="M1 1 L1 13 L4 10 L7 15 L9 14 L6 9 L10 9 Z" fill="#fff" stroke="#00008a" stroke-width="1.2"/></svg>
<svg style="left:4px;top:178px;" width="16" height="16" viewBox="0 0 16 16"><path d="M1 3 L6 5 V15 L1 13 Z" fill="#800"/><path d="M6 5 L15 2 V12 L6 15 Z" fill="#e33"/><path d="M8 6 V13 M11 5 V12 M6 8 L15 6 M6 11 L15 9" stroke="#fff" stroke-width="0.8"/><path d="M1 3 L6 5 L15 2" stroke="#000" fill="none"/></svg>
<svg style="left:4px;top:200px;" width="16" height="16" viewBox="0 0 16 16"><path d="M1 2 L6 4 V15 L1 13 Z" fill="#ee0" stroke="#000"/><path d="M6 1 H10 V12 L6 15" fill="#888" stroke="#000"/><circle cx="3" cy="9" r="0.8" fill="#000"/></svg>
<svg style="left:4px;top:222px;" width="16" height="16" viewBox="0 0 16 16"><path d="M2 4 L10 1 V12 L2 15 Z" fill="#fff" stroke="#000" stroke-width="1.4"/><path d="M6 2.5 V13.5 M2 9.5 L10 6.5" stroke="#000" stroke-width="1.2"/></svg>
<svg style="left:4px;top:244px;" width="16" height="16" viewBox="0 0 16 16"><path d="M4 2 Q6 0 8 2 V8 L12 9 V14 M4 2 V10 H12 M3 10 V15 M6 11 V15" stroke="#00008a" fill="#fff" stroke-width="1.1"/><path d="M2 14 H13" stroke="#666" stroke-width="2"/></svg>
<svg style="left:4px;top:266px;" width="16" height="16" viewBox="0 0 16 16"><rect x="0.5" y="0.5" width="14" height="14" fill="#fff" stroke="#000" stroke-width="1.3"/><path d="M6 2 V12 H2" stroke="#000" fill="none"/><rect x="7" y="6" width="7" height="8" fill="#0cf"/><path d="M7 6 L14 14 M14 6 L7 14" stroke="#00f"/></svg>
<svg style="left:4px;top:288px;" width="16" height="16" viewBox="0 0 16 16"><path d="M1 6 L7 1 L14 6 L8 12 Z" fill="#ff6" stroke="#000"/><path d="M1 6 V10 L8 16 L14 10 V6" fill="#fff" stroke="#000"/></svg>
<svg style="left:4px;top:310px;" width="16" height="16" viewBox="0 0 16 16"><rect x="0.5" y="0.5" width="14" height="14" fill="#fff" stroke="#000" stroke-width="1.3"/><path d="M2 2 H13 V13 H2 Z" fill="#00c"/><path d="M2 2 H5 V5 H2 Z M8 2 H11 V5 H8 Z M5 5 H8 V8 H5 Z M11 5 H13 V8 H11 Z M2 8 H5 V11 H2 Z M8 8 H11 V11 H8 Z M5 11 H8 V13 H5 Z M11 11 H13 V13 H11 Z" fill="#fff"/></svg>
<svg style="left:4px;top:332px;" width="16" height="16" viewBox="0 0 16 16"><circle cx="4" cy="4" r="3" fill="none" stroke="#000" stroke-width="1.2"/><circle cx="12" cy="4" r="3" fill="none" stroke="#000" stroke-width="1.2"/><path d="M4 7 Q3 11 4 15 M12 7 Q11 11 12 15" stroke="#000" stroke-dasharray="2 1" fill="none"/></svg>
<svg style="left:4px;top:354px;" width="16" height="16" viewBox="0 0 16 16"><path d="M2 1 V15 M6 2 Q7 11 14 14" stroke="#00008a" stroke-width="1.3" fill="none"/><path d="M0 3 L2 0 L4 3 M0 13 L2 16 L4 13" stroke="#00008a" fill="none"/></svg>
<svg style="left:4px;top:376px;" width="16" height="16" viewBox="0 0 16 16"><path d="M5 2 H15 L11 12 H1 Z" fill="none" stroke="#080" stroke-width="1.2"/></svg>
<svg style="left:4px;top:398px;" width="16" height="16" viewBox="0 0 16 16"><path d="M2 2 V10 M14 2 V10 M2 4 H14" stroke="#000"/><rect x="2" y="12" width="12" height="3" fill="#fff" stroke="#00008a" stroke-width="1.2"/></svg>
<svg style="left:4px;top:420px;" width="16" height="16" viewBox="0 0 16 16"><path d="M1 4 V8 H16" stroke="#000" stroke-width="1.2" fill="none"/><path d="M3 8 L9 2 L15 8 L9 13 Z" fill="none" stroke="#000" stroke-width="1.2"/><path d="M7 10 H11" stroke="#000"/></svg>
<svg style="left:4px;top:442px;" width="16" height="16" viewBox="0 0 16 16"><circle cx="9" cy="8" r="5" fill="#f0f0f0" stroke="#a8a8a8" stroke-width="1.5"/><path d="M9 8 V13 A5 5 0 0 1 4 8 Z M9 8 V3 A5 5 0 0 1 14 8 Z" fill="#a8a8a8"/><path d="M1 8 H16 M9 1 V15" stroke="#a8a8a8"/></svg>
<svg style="left:4px;top:464px;" width="16" height="16" viewBox="0 0 16 16"><path d="M1 2 H13 V5 M1 2 V5 M7 2 V15 M4 15 H10" stroke="#00008a" stroke-width="2" fill="none"/></svg>
<div class="a" style="left:1px;top:784px;width:97px;height:20px;background:#f0f0f0;border-right:2px solid #000;border-bottom:2px solid #000;border-top:1px solid #fff"></div>
<div class="t" style="left:34px;top:787px;font-size:12px;color:#000;font-weight:normal;transform-origin:0 50%;transform:scaleX(1.008);">View</div>
<div class="a" style="left:1px;top:804px;width:97px;height:20px;background:#f0f0f0;border-right:2px solid #000;border-bottom:2px solid #000;border-top:1px solid #fff"></div>
<div class="t" style="left:20px;top:807px;font-size:12px;color:#000;font-weight:normal;transform-origin:0 50%;transform:scaleX(1.051);">Modelling</div>
<div class="a" style="left:1px;top:824px;width:97px;height:20px;background:#f0f0f0;border-right:2px solid #000;border-bottom:2px solid #000;border-top:1px solid #fff"></div>
<div class="t" style="left:25px;top:827px;font-size:12px;color:#000;font-weight:normal;transform-origin:0 50%;transform:scaleX(1.023);">Drafting</div>
<div class="a" style="left:1px;top:844px;width:97px;height:20px;background:#f0f0f0;border-right:2px solid #000;border-bottom:2px solid #000;border-top:1px solid #fff"></div>
<div class="t" style="left:20px;top:847px;font-size:12px;color:#000;font-weight:normal;transform-origin:0 50%;transform:scaleX(0.975);">Rendering</div>
<div class="a" style="left:1px;top:864px;width:97px;height:20px;background:#f0f0f0;border-right:2px solid #000;border-bottom:2px solid #000;border-top:1px solid #fff"></div>
<div class="t" style="left:36px;top:867px;font-size:12px;color:#000;font-weight:normal;transform-origin:0 50%;transform:scaleX(0.967);">Site</div>
<div class="a" style="left:1px;top:884px;width:97px;height:20px;background:#f0f0f0;border-right:2px solid #000;border-bottom:2px solid #000;border-top:1px solid #fff"></div>
<div class="t" style="left:25px;top:887px;font-size:12px;color:#000;font-weight:normal;transform-origin:0 50%;transform:scaleX(0.962);">Massing</div>
<div class="a" style="left:1px;top:904px;width:97px;height:20px;background:#f0f0f0;border-right:2px solid #000;border-bottom:2px solid #000;border-top:1px solid #fff"></div>
<div class="t" style="left:6px;top:907px;font-size:12px;color:#000;font-weight:normal;transform-origin:0 50%;transform:scaleX(0.983);">Room and Area</div>
<div class="a" style="left:1px;top:924px;width:97px;height:20px;background:#f0f0f0;border-right:2px solid #000;border-bottom:2px solid #000;border-top:1px solid #fff"></div>
<div class="t" style="left:21px;top:927px;font-size:12px;color:#000;font-weight:normal;transform-origin:0 50%;transform:scaleX(0.993);">Structural</div>
<div class="a" style="left:1px;top:944px;width:97px;height:20px;background:#f0f0f0;border-right:2px solid #000;border-bottom:2px solid #000;border-top:1px solid #fff"></div>
<div class="t" style="left:12px;top:947px;font-size:12px;color:#000;font-weight:normal;transform-origin:0 50%;transform:scaleX(1.009);">Construction</div>
<div class="a" style="left:98px;top:133px;width:6px;height:829px;background:#f0f0f0"></div>
<div class="a" style="left:103px;top:133px;width:3px;height:829px;background:#6a6a6a"></div>
<div class="a" style="left:106px;top:133px;width:148px;height:829px;background:#f0f0f0"></div>
<div class="a" style="left:106px;top:133px;width:148px;height:20px;background:linear-gradient(#c0d3e8,#d9e6f4)"></div>
<div class="t" style="left:108px;top:136px;font-size:12px;color:#000;font-weight:normal;transform-origin:0 50%;transform:scaleX(0.994);">Project1 - Project bro...</div>
<div class="a" style="left:237px;top:136px;width:13px;height:13px;background:#dfe8f3;border:1px solid #7a8aa8;border-radius:2px"></div>
<svg style="left:239px;top:138px;" width="9" height="9" viewBox="0 0 9 9"><path d="M2 2 L7 7 M7 2 L2 7" stroke="#333" stroke-width="1.8"/></svg>
<div class="a" style="left:253px;top:133px;width:1px;height:829px;background:#a0a0a0"></div>
<div class="a" style="left:109px;top:153px;width:142px;height:808px;background:#fff;border-left:1px solid #828790;border-top:1px solid #828790"></div>
<svg style="left:0px;top:0px;" width="300" height="500" viewBox="0 0 300 500"><path d="M118.5 167 V466" stroke="#a0a0a0" stroke-dasharray="1 1"/><path d="M138.5 170 V306" stroke="#a0a0a0" stroke-dasharray="1 1"/><path d="M158.5 186 V226" stroke="#a0a0a0" stroke-dasharray="1 1"/><path d="M158.5 250 V274" stroke="#a0a0a0" stroke-dasharray="1 1"/><path d="M158.5 314 V370" stroke="#a0a0a0" stroke-dasharray="1 1"/><path d="M124 162.5 H129" stroke="#a0a0a0" stroke-dasharray="1 1"/><path d="M143 178.5 H155" stroke="#a0a0a0" stroke-dasharray="1 1"/><path d="M143 242.5 H155" stroke="#a0a0a0" stroke-dasharray="1 1"/><path d="M143 290.5 H155" stroke="#a0a0a0" stroke-dasharray="1 1"/><path d="M143 306.5 H155" stroke="#a0a0a0" stroke-dasharray="1 1"/><path d="M159 194.5 H174" stroke="#a0a0a0" stroke-dasharray="1 1"/><path d="M159 210.5 H174" stroke="#a0a0a0" stroke-dasharray="1 1"/><path d="M159 226.5 H174" stroke="#a0a0a0" stroke-dasharray="1 1"/><path d="M159 258.5 H174" stroke="#a0a0a0" stroke-dasharray="1 1"/><path d="M159 274.5 H174" stroke="#a0a0a0" stroke-dasharray="1 1"/><path d="M159 322.5 H174" stroke="#a0a0a0" stroke-dasharray="1 1"/><path d="M159 338.5 H174" stroke="#a0a0a0" stroke-dasharray="1 1"/><path d="M159 354.5 H174" stroke="#a0a0a0" stroke-dasharray="1 1"/><path d="M159 370.5 H174" stroke="#a0a0a0" stroke-dasharray="1 1"/><path d="M119 386.5 H129" stroke="#a0a0a0" stroke-dasharray="1 1"/><path d="M119 402.5 H129" stroke="#a0a0a0" stroke-dasharray="1 1"/><path d="M119 418.5 H129" stroke="#a0a0a0" stroke-dasharray="1 1"/><path d="M119 466.5 H129" stroke="#a0a0a0" stroke-dasharray="1 1"/><path d="M123 434.5 H129" stroke="#a0a0a0" stroke-dasharray="1 1"/><path d="M123 450.5 H129" stroke="#a0a0a0" stroke-dasharray="1 1"/></svg>
<div class="a" style="left:114px;top:158px;width:9px;height:9px;background:linear-gradient(#fff,#dcdcdc);border:1px solid #909090;border-radius:1px"></div>
<svg style="left:114px;top:158px;" width="9" height="9" viewBox="0 0 9 9"><path d="M2 4.5 H7" stroke="#2a3a8a"/></svg>
<div class="a" style="left:134px;top:174px;width:9px;height:9px;background:linear-gradient(#fff,#dcdcdc);border:1px solid #909090;border-radius:1px"></div>
<svg style="left:134px;top:174px;" width="9" height="9" viewBox="0 0 9 9"><path d="M2 4.5 H7" stroke="#2a3a8a"/></svg>
<div class="a" style="left:134px;top:238px;width:9px;height:9px;background:linear-gradient(#fff,#dcdcdc);border:1px solid #909090;border-radius:1px"></div>
<svg style="left:134px;top:238px;" width="9" height="9" viewBox="0 0 9 9"><path d="M2 4.5 H7" stroke="#2a3a8a"/></svg>
<div class="a" style="left:134px;top:286px;width:9px;height:9px;background:linear-gradient(#fff,#dcdcdc);border:1px solid #909090;border-radius:1px"></div>
<svg style="left:134px;top:286px;" width="9" height="9" viewBox="0 0 9 9"><path d="M2 4.5 H7" stroke="#2a3a8a"/><path d="M4.5 2 V7" stroke="#2a3a8a"/></svg>
<div class="a" style="left:134px;top:302px;width:9px;height:9px;background:linear-gradient(#fff,#dcdcdc);border:1px solid #909090;border-radius:1px"></div>
<svg style="left:134px;top:302px;" width="9" height="9" viewBox="0 0 9 9"><path d="M2 4.5 H7" stroke="#2a3a8a"/></svg>
<div class="a" style="left:114px;top:430px;width:9px;height:9px;background:linear-gradient(#fff,#dcdcdc);border:1px solid #909090;border-radius:1px"></div>
<svg style="left:114px;top:430px;" width="9" height="9" viewBox="0 0 9 9"><path d="M2 4.5 H7" stroke="#2a3a8a"/><path d="M4.5 2 V7" stroke="#2a3a8a"/></svg>
<div class="a" style="left:114px;top:446px;width:9px;height:9px;background:linear-gradient(#fff,#dcdcdc);border:1px solid #909090;border-radius:1px"></div>
<svg style="left:114px;top:446px;" width="9" height="9" viewBox="0 0 9 9"><path d="M2 4.5 H7" stroke="#2a3a8a"/><path d="M4.5 2 V7" stroke="#2a3a8a"/></svg>
<svg style="left:130px;top:157px;" width="16" height="10" viewBox="0 0 16 10"><path d="M0.5 5 Q8 -3 15.5 5 Q8 13 0.5 5 Z" fill="#fff" stroke="#000" stroke-width="1.3"/><circle cx="8" cy="5" r="2.8" fill="#000"/><circle cx="7.2" cy="4" r="0.8" fill="#888"/></svg>
<div class="a" style="left:173px;top:314px;width:68px;height:16px;background:#e3e3e3"></div>
<div class="t" style="left:152px;top:155px;font-size:12px;color:#000;font-weight:normal;transform-origin:0 50%;transform:scaleX(0.853);">Views (all)</div>
<div class="t" style="left:156px;top:171px;font-size:12px;color:#000;font-weight:normal;transform-origin:0 50%;transform:scaleX(0.840);">Floor Plans</div>
<div class="t" style="left:176px;top:187px;font-size:12px;color:#000;font-weight:normal;transform-origin:0 50%;transform:scaleX(0.869);">Piso 0</div>
<div class="t" style="left:176px;top:203px;font-size:12px;color:#000;font-weight:bold;transform-origin:0 50%;transform:scaleX(0.990);">Piso 1</div>
<div class="t" style="left:176px;top:219px;font-size:12px;color:#000;font-weight:normal;transform-origin:0 50%;transform:scaleX(0.822);">Site</div>
<div class="t" style="left:156px;top:235px;font-size:12px;color:#000;font-weight:normal;transform-origin:0 50%;transform:scaleX(0.842);">Ceiling Plans</div>
<div class="t" style="left:176px;top:251px;font-size:12px;color:#000;font-weight:normal;transform-origin:0 50%;transform:scaleX(0.869);">Piso 0</div>
<div class="t" style="left:176px;top:267px;font-size:12px;color:#000;font-weight:normal;transform-origin:0 50%;transform:scaleX(0.869);">Piso 1</div>
<div class="t" style="left:156px;top:283px;font-size:12px;color:#000;font-weight:normal;transform-origin:0 50%;transform:scaleX(0.872);">3D Views</div>
<div class="t" style="left:156px;top:299px;font-size:12px;color:#000;font-weight:normal;transform-origin:0 50%;transform:scaleX(0.863);">Elevations (Building</div>
<div class="t" style="left:176px;top:315px;font-size:12px;color:#000;font-weight:normal;transform-origin:0 50%;transform:scaleX(0.869);">Al&ccedil;. Posterior</div>
<div class="t" style="left:176px;top:331px;font-size:12px;color:#000;font-weight:normal;transform-origin:0 50%;transform:scaleX(0.865);">Al&ccedil;. Principal</div>
<div class="t" style="left:176px;top:347px;font-size:12px;color:#000;font-weight:normal;transform-origin:0 50%;transform:scaleX(0.870);">Al&ccedil;.Lat.Direito</div>
<div class="t" style="left:176px;top:363px;font-size:12px;color:#000;font-weight:normal;transform-origin:0 50%;transform:scaleX(0.873);">Al&ccedil;.Lat.Esquerd</div>
<div class="t" style="left:152px;top:379px;font-size:12px;color:#000;font-weight:normal;transform-origin:0 50%;transform:scaleX(0.869);">Legends</div>
<div class="t" style="left:152px;top:395px;font-size:12px;color:#000;font-weight:normal;transform-origin:0 50%;transform:scaleX(0.894);">Schedules/Quantitie</div>
<div class="t" style="left:152px;top:411px;font-size:12px;color:#000;font-weight:normal;transform-origin:0 50%;transform:scaleX(0.857);">Sheets (all)</div>
<div class="t" style="left:152px;top:427px;font-size:12px;color:#000;font-weight:normal;transform-origin:0 50%;transform:scaleX(0.806);">Families</div>
<div class="t" style="left:152px;top:443px;font-size:12px;color:#000;font-weight:normal;transform-origin:0 50%;transform:scaleX(0.838);">Groups</div>
<div class="t" style="left:152px;top:459px;font-size:12px;color:#000;font-weight:normal;transform-origin:0 50%;transform:scaleX(0.886);">Revit Links</div>
<svg style="left:130px;top:379px;" width="16" height="14" viewBox="0 0 16 14"><rect x="0.5" y="0.5" width="15" height="13" fill="#fff" stroke="#000" stroke-width="1.2"/><path d="M3 3 H6 V6 H3 Z M8 4 H13 M3 8 H6 M8 8 H13 M3 11 H6 M8 11 H13" stroke="#000"/></svg>
<svg style="left:131px;top:395px;" width="15" height="14" viewBox="0 0 15 14"><rect x="0.5" y="0.5" width="14" height="13" fill="#fff" stroke="#000" stroke-width="1.2"/><path d="M0.5 4 H14.5 M0.5 7 H14.5 M0.5 10 H14.5 M5 4 V13.5 M10 4 V13.5" stroke="#000"/></svg>
<svg style="left:131px;top:412px;" width="15" height="12" viewBox="0 0 15 12"><rect x="0.5" y="0.5" width="14" height="11" fill="#fff" stroke="#000" stroke-width="1.2"/><path d="M10 1 V11" stroke="#000"/><path d="M12 3 V9" stroke="#000" stroke-dasharray="1 1"/></svg>
<svg style="left:131px;top:427px;" width="15" height="14" viewBox="0 0 15 14"><rect x="1" y="5" width="3" height="9" rx="1.5" fill="#fff" stroke="#000"/><path d="M7 3 L14 0 V9 L7 12 Z M10.5 2 V10.5 M7 7 L14 4.5" fill="#fff" stroke="#000"/></svg>
<svg style="left:130px;top:443px;" width="15" height="14" viewBox="0 0 15 14"><rect x="0.5" y="0.5" width="14" height="13" fill="none" stroke="#000" stroke-dasharray="2 1"/><rect x="3" y="3" width="4" height="4" fill="none" stroke="#000"/><rect x="3" y="9" width="4" height="2" fill="none" stroke="#000"/><rect x="9" y="3" width="3" height="8" fill="none" stroke="#000"/></svg>
<div class="a" style="left:130px;top:460px;width:16px;height:11px;background:#fff;border:1px solid #000"></div>
<div class="a" style="left:110px;top:946px;width:141px;height:15px;background:#f0f0f0"></div>
<svg style="left:115px;top:950px;" width="5" height="7" viewBox="0 0 5 7"><path d="M4 0 L0 3.5 L4 7 Z" fill="#606060"/></svg>
<svg style="left:239px;top:950px;" width="5" height="7" viewBox="0 0 5 7"><path d="M0 0 L4 3.5 L0 7 Z" fill="#606060"/></svg>
<div class="a" style="left:128px;top:947px;width:75px;height:13px;background:linear-gradient(#f3f3f3,#d8d8d8);border:1px solid #9a9a9a;border-radius:2px"></div>
<svg style="left:161px;top:950px;" width="8" height="7" viewBox="0 0 8 7"><path d="M1.5 0 V7 M4 0 V7 M6.5 0 V7" stroke="#555"/></svg>
<div class="a" style="left:254px;top:133px;width:7px;height:829px;background:#f0f0f0"></div>
<div class="a" style="left:257px;top:133px;width:1px;height:829px;background:#fff"></div>
<div class="a" style="left:261px;top:131px;width:983px;height:832px;background:#ababab"></div>
<div class="a" style="left:261px;top:131px;width:983px;height:2px;background:#6d6d6d"></div>
<div class="a" style="left:261px;top:131px;width:2px;height:831px;background:#6d6d6d"></div>
<div class="a" style="left:263px;top:133px;width:493px;height:804px;background:linear-gradient(180deg,#9bb6d4 0px,#a9c2de 14px,#b9d1ea 28px,#bcd3eb 100%);border-radius:6px 6px 0 0;border:1px solid #3a3f4a;border-right:2px solid #000;border-bottom:2px solid #000"></div>
<div class="a" style="left:264px;top:134px;width:490px;height:1px;background:rgba(255,255,255,0.8)"></div>
<svg style="left:273px;top:142px;" width="16" height="16" viewBox="0 0 16 16"><path d="M0.5 0.5 H11 L15.5 5 V15.5 H0.5 Z" fill="#f4f4f4" stroke="#888"/><path d="M11 0.5 L15.5 5 H11 Z" fill="#b44aa8"/><rect x="0.5" y="8" width="15" height="7.5" fill="#b44aa8" stroke="#888"/><path d="M2 7 H14" stroke="#555" stroke-dasharray="1.5 1"/><text x="8" y="14.5" font-size="6.5" text-anchor="middle" fill="#fff" font-weight="bold" font-family="Liberation Sans">RVT</text></svg>
<div class="t" style="left:293px;top:143px;font-size:12px;color:#000;font-weight:normal;transform-origin:0 50%;transform:scaleX(0.964);">Project1 - Floor Plan: Piso 1</div>
<div class="a" style="left:658px;top:143px;width:27px;height:15px;background:linear-gradient(180deg,#dbe6f3 0%,#c5d5e8 45%,#aec4dd 55%,#c8d9ec 100%);border:1px solid #6a7a98;border-radius:3px"></div>
<div class="a" style="left:665px;top:150px;width:11px;height:5px;background:#f4f4f4;border:1px solid #333;border-radius:1px"></div>
<div class="a" style="left:687px;top:143px;width:27px;height:15px;background:linear-gradient(180deg,#dbe6f3 0%,#c5d5e8 45%,#aec4dd 55%,#c8d9ec 100%);border:1px solid #6a7a98;border-radius:3px"></div>
<div class="a" style="left:695px;top:147px;width:11px;height:8px;background:#f4f4f4;border:1.5px solid #333;border-radius:1px"></div>
<div class="a" style="left:698px;top:149px;width:5px;height:3px;background:#9ab;"></div>
<div class="a" style="left:716px;top:143px;width:28px;height:15px;background:linear-gradient(180deg,#e8a493 0%,#d47a66 45%,#c0442a 55%,#d26a4f 100%);border:1px solid #6a1a1a;border-radius:3px"></div>
<svg style="left:724px;top:145px;" width="12" height="10" viewBox="0 0 12 10"><path d="M2 1.5 L10 8.5 M10 1.5 L2 8.5" stroke="#333" stroke-width="4"/><path d="M2 1.5 L10 8.5 M10 1.5 L2 8.5" stroke="#f8f8f8" stroke-width="2"/></svg>
<div class="a" style="left:756px;top:133px;width:489px;height:804px;background:linear-gradient(180deg,#b7cbe1 0px,#c4d6ea 14px,#d5e3f2 28px,#d8e5f3 100%);border-radius:6px 6px 0 0;border:1px solid #6a6f7a;border-right:none;border-bottom:2px solid #222"></div>
<div class="a" style="left:757px;top:134px;width:486px;height:1px;background:rgba(255,255,255,0.8)"></div>
<svg style="left:766px;top:142px;" width="16" height="16" viewBox="0 0 16 16"><path d="M0.5 0.5 H11 L15.5 5 V15.5 H0.5 Z" fill="#f4f4f4" stroke="#888"/><path d="M11 0.5 L15.5 5 H11 Z" fill="#b44aa8"/><rect x="0.5" y="8" width="15" height="7.5" fill="#b44aa8" stroke="#888"/><path d="M2 7 H14" stroke="#555" stroke-dasharray="1.5 1"/><text x="8" y="14.5" font-size="6.5" text-anchor="middle" fill="#fff" font-weight="bold" font-family="Liberation Sans">RVT</text></svg>
<div class="t" style="left:786px;top:143px;font-size:12px;color:#000;font-weight:normal;transform-origin:0 50%;transform:scaleX(0.929);">Project1 - 3D View: {3D}</div>
<div class="a" style="left:1149px;top:143px;width:27px;height:15px;background:linear-gradient(180deg,#dde7f2 0%,#cfdcea 50%,#c2d3e7 55%,#d5e2f0 100%);border:1px solid #8a9ab8;border-radius:3px"></div>
<div class="a" style="left:1156px;top:150px;width:11px;height:5px;background:#f4f4f4;border:1px solid #333;border-radius:1px"></div>
<div class="a" style="left:1178px;top:143px;width:27px;height:15px;background:linear-gradient(180deg,#dde7f2 0%,#cfdcea 50%,#c2d3e7 55%,#d5e2f0 100%);border:1px solid #8a9ab8;border-radius:3px"></div>
<div class="a" style="left:1186px;top:147px;width:11px;height:8px;background:#f4f4f4;border:1.5px solid #333;border-radius:1px"></div>
<div class="a" style="left:1189px;top:149px;width:5px;height:3px;background:#9ab;"></div>
<div class="a" style="left:1207px;top:143px;width:28px;height:15px;background:linear-gradient(180deg,#dde7f2 0%,#cfdcea 50%,#c2d3e7 55%,#d5e2f0 100%);border:1px solid #8a9ab8;border-radius:3px"></div>
<svg style="left:1215px;top:145px;" width="12" height="10" viewBox="0 0 12 10"><path d="M2 1.5 L10 8.5 M10 1.5 L2 8.5" stroke="#333" stroke-width="4"/><path d="M2 1.5 L10 8.5 M10 1.5 L2 8.5" stroke="#f8f8f8" stroke-width="2"/></svg>
<div class="a" style="left:753px;top:140px;width:1px;height:795px;background:#62d8ee"></div>
<div class="a" style="left:264px;top:933px;width:490px;height:1px;background:#62d8ee"></div>
<div class="a" style="left:271px;top:162px;width:476px;height:766px;background:#f0f0f0;border-left:1px solid #555;border-top:1px solid #555"></div>
<div class="a" style="left:272px;top:163px;width:458px;height:747px;background:#fff"></div>
<div class="a" style="left:730px;top:163px;width:17px;height:747px;background:#f0f0f0"></div>
<div class="a" style="left:746px;top:163px;width:1px;height:747px;background:#fafafa"></div>
<svg style="left:735px;top:170px;" width="8" height="5" viewBox="0 0 8 5"><path d="M0 4 L4 0 L8 4 Z" fill="#202020"/></svg>
<svg style="left:735px;top:900px;" width="8" height="5" viewBox="0 0 8 5"><path d="M0 0 L4 4 L8 0 Z" fill="#202020"/></svg>
<div class="a" style="left:731px;top:529px;width:15px;height:15px;background:linear-gradient(#f6f6f6,#d6d6d6);border:1px solid #8a8a8a;border-radius:2px"></div>
<div class="a" style="left:272px;top:910px;width:475px;height:18px;background:#f0f0f0"></div>
<div class="t" style="left:297px;top:912px;font-size:11px;color:#000;font-weight:normal;transform-origin:0 50%;transform:scaleX(0.981);">1 : 100</div>
<svg style="left:356px;top:913px;" width="11" height="12" viewBox="0 0 11 12"><rect x="0.5" y="0.5" width="10" height="10" fill="#fff" stroke="#000" stroke-width="1.2"/><rect x="2" y="2" width="2" height="2" fill="#777"/><rect x="2" y="6" width="2" height="2" fill="#777"/><rect x="4" y="4" width="2" height="2" fill="#777"/><rect x="4" y="8" width="2" height="2" fill="#777"/><rect x="6" y="2" width="2" height="2" fill="#777"/><rect x="6" y="6" width="2" height="2" fill="#777"/><rect x="8" y="4" width="2" height="2" fill="#777"/><rect x="8" y="8" width="2" height="2" fill="#777"/></svg>
<svg style="left:373px;top:913px;" width="16" height="12" viewBox="0 0 16 12"><path d="M1 5 L8 1 L15 4 V8 L8 12 L1 9 Z" fill="#8cc8f0" stroke="#2a6ab0" stroke-width="1.1"/><path d="M1 5 L8 8 L15 4 M8 8 V12" stroke="#2a6ab0" fill="none"/></svg>
<svg style="left:394px;top:913px;" width="14" height="12" viewBox="0 0 14 12"><path d="M2 10 Q0 5 5 1 H10 Q12 4 8 9 Z" fill="#fff" stroke="#999"/><path d="M6 11 H13" stroke="#ccc" stroke-width="2"/></svg>
<svg style="left:416px;top:913px;" width="12" height="12" viewBox="0 0 12 12"><path d="M1 4 H11 M1 8 H11 M4 1 V12 M8 1 V12" stroke="#0000e0" stroke-width="2"/><path d="M0 12 L12 0" stroke="#c00000" stroke-width="1.4"/></svg>
<svg style="left:437px;top:913px;" width="13" height="12" viewBox="0 0 13 12"><path d="M3 3 V10 H13 M0 6 H9 V12" stroke="#0000e0" stroke-width="2" fill="none"/><circle cx="11" cy="3" r="2" fill="#aaa"/></svg>
<svg style="left:456px;top:913px;" width="16" height="12" viewBox="0 0 16 12"><path d="M1 5 Q4 1 9 3 M7 9 Q4 11 2 6 M9 3 Q12 1 15 4 Q14 9 10 8 Q8 6 9 3" stroke="#000" fill="none" stroke-width="1.1"/></svg>
<svg style="left:481px;top:913px;" width="9" height="12" viewBox="0 0 9 12"><circle cx="4.5" cy="4.5" r="4" fill="#fff" stroke="#444"/><rect x="2.5" y="8" width="4" height="3" fill="#ccc" stroke="#444"/></svg>
<div class="a" style="left:497px;top:911px;width:233px;height:16px;background:#ececec"></div>
<svg style="left:502px;top:915px;" width="5" height="8" viewBox="0 0 5 8"><path d="M4 0 L0 4 L4 8 Z" fill="#202020"/></svg>
<svg style="left:718px;top:915px;" width="5" height="8" viewBox="0 0 5 8"><path d="M0 0 L4 4 L0 8 Z" fill="#202020"/></svg>
<div class="a" style="left:605px;top:911px;width:16px;height:15px;background:linear-gradient(#f6f6f6,#d0d0d0);border:1px solid #8a8a8a;border-radius:2px"></div>
<svg style="left:735px;top:916px;" width="9" height="9" viewBox="0 0 9 9"><path d="M7.5 1 V2 M4.5 4 V5 M7.5 4 V5 M1.5 7 V8 M4.5 7 V8 M7.5 7 V8" stroke="#9a9a9a"/></svg>
<div class="a" style="left:763px;top:162px;width:475px;height:766px;background:#f0f0f0;border-left:1px solid #555;border-top:1px solid #555"></div>
<div class="a" style="left:764px;top:163px;width:457px;height:747px;background:#fff"></div>
<div class="a" style="left:1221px;top:163px;width:17px;height:747px;background:#f0f0f0"></div>
<div class="a" style="left:1237px;top:163px;width:1px;height:747px;background:#fafafa"></div>
<svg style="left:1226px;top:170px;" width="8" height="5" viewBox="0 0 8 5"><path d="M0 4 L4 0 L8 4 Z" fill="#202020"/></svg>
<svg style="left:1226px;top:900px;" width="8" height="5" viewBox="0 0 8 5"><path d="M0 0 L4 4 L8 0 Z" fill="#202020"/></svg>
<div class="a" style="left:1222px;top:529px;width:15px;height:15px;background:linear-gradient(#f6f6f6,#d6d6d6);border:1px solid #8a8a8a;border-radius:2px"></div>
<div class="a" style="left:764px;top:910px;width:474px;height:18px;background:#f0f0f0"></div>
<div class="t" style="left:789px;top:912px;font-size:11px;color:#000;font-weight:normal;transform-origin:0 50%;transform:scaleX(0.981);">1 : 100</div>
<svg style="left:847px;top:913px;" width="11" height="12" viewBox="0 0 11 12"><rect x="0.5" y="0.5" width="10" height="10" fill="#fff" stroke="#000" stroke-width="1.2"/><rect x="2" y="2" width="4" height="4" fill="#000"/><rect x="6" y="6" width="3" height="3" fill="#000"/></svg>
<svg style="left:866px;top:913px;" width="16" height="12" viewBox="0 0 16 12"><path d="M1 5 L8 1 L15 4 V8 L8 12 L1 9 Z" fill="#8cc8f0" stroke="#2a6ab0" stroke-width="1.1"/><path d="M1 5 L8 8 L15 4 M8 8 V12" stroke="#2a6ab0" fill="none"/></svg>
<svg style="left:887px;top:913px;" width="14" height="12" viewBox="0 0 14 12"><path d="M2 10 Q0 5 5 1 H10 Q12 4 8 9 Z" fill="#fff" stroke="#999"/><path d="M6 11 H13" stroke="#ccc" stroke-width="2"/></svg>
<svg style="left:906px;top:913px;" width="16" height="12" viewBox="0 0 16 12"><path d="M3 5 Q2 11 8 11 Q14 11 13 5 Z" fill="#fff" stroke="#000" stroke-width="1.1"/><path d="M3 6 L0 3 M13 6 Q16 5 15 8 M6 4 Q8 1 10 4" stroke="#000" fill="none"/></svg>
<svg style="left:928px;top:913px;" width="12" height="12" viewBox="0 0 12 12"><path d="M1 4 H11 M1 8 H11 M4 1 V12 M8 1 V12" stroke="#0000e0" stroke-width="2"/><path d="M0 12 L12 0" stroke="#c00000" stroke-width="1.4"/></svg>
<svg style="left:949px;top:913px;" width="13" height="12" viewBox="0 0 13 12"><path d="M3 3 V10 H13 M0 6 H9 V12" stroke="#0000e0" stroke-width="2" fill="none"/><circle cx="11" cy="3" r="2" fill="#aaa"/></svg>
<svg style="left:969px;top:913px;" width="16" height="12" viewBox="0 0 16 12"><path d="M1 5 Q4 1 9 3 M7 9 Q4 11 2 6 M9 3 Q12 1 15 4 Q14 9 10 8 Q8 6 9 3" stroke="#000" fill="none" stroke-width="1.1"/></svg>
<svg style="left:994px;top:913px;" width="9" height="12" viewBox="0 0 9 12"><circle cx="4.5" cy="4.5" r="4" fill="#fff" stroke="#444"/><rect x="2.5" y="8" width="4" height="3" fill="#ccc" stroke="#444"/></svg>
<div class="a" style="left:1010px;top:911px;width:211px;height:16px;background:#ececec"></div>
<svg style="left:1015px;top:915px;" width="5" height="8" viewBox="0 0 5 8"><path d="M4 0 L0 4 L4 8 Z" fill="#202020"/></svg>
<svg style="left:1209px;top:915px;" width="5" height="8" viewBox="0 0 5 8"><path d="M0 0 L4 4 L0 8 Z" fill="#202020"/></svg>
<div class="a" style="left:1106px;top:911px;width:16px;height:15px;background:linear-gradient(#f6f6f6,#d0d0d0);border:1px solid #8a8a8a;border-radius:2px"></div>
<svg style="left:1226px;top:916px;" width="9" height="9" viewBox="0 0 9 9"><path d="M7.5 1 V2 M4.5 4 V5 M7.5 4 V5 M1.5 7 V8 M4.5 7 V8 M7.5 7 V8" stroke="#9a9a9a"/></svg>
<div class="a" style="left:263px;top:937px;width:158px;height:24px;background:linear-gradient(180deg,#b9cde4 0%,#cddcee 50%,#d8e5f3 100%);border:1px solid #6a6f7a;border-bottom:none;border-radius:6px 6px 0 0"></div>
<svg style="left:268px;top:941px;" width="16" height="16" viewBox="0 0 16 16"><path d="M0.5 0.5 H11 L15.5 5 V15.5 H0.5 Z" fill="#f4f4f4" stroke="#888"/><path d="M11 0.5 L15.5 5 H11 Z" fill="#b44aa8"/><rect x="0.5" y="8" width="15" height="7.5" fill="#b44aa8" stroke="#888"/><text x="8" y="14.5" font-size="6.5" text-anchor="middle" fill="#fff" font-weight="bold" font-family="Liberation Sans">RVT</text></svg>
<div class="t" style="left:288px;top:943px;font-size:12px;color:#333;font-weight:normal;transform-origin:0 50%;transform:scaleX(0.894);">Rece...</div>
<div class="a" style="left:330px;top:943px;width:27px;height:15px;background:linear-gradient(180deg,#dde7f2 0%,#cfdcea 50%,#c2d3e7 55%,#d5e2f0 100%);border:1px solid #8a9ab8;border-radius:3px"></div>
<div class="a" style="left:360px;top:943px;width:27px;height:15px;background:linear-gradient(180deg,#dde7f2 0%,#cfdcea 50%,#c2d3e7 55%,#d5e2f0 100%);border:1px solid #8a9ab8;border-radius:3px"></div>
<div class="a" style="left:390px;top:943px;width:27px;height:15px;background:linear-gradient(180deg,#dde7f2 0%,#cfdcea 50%,#c2d3e7 55%,#d5e2f0 100%);border:1px solid #8a9ab8;border-radius:3px"></div>
<svg style="left:338px;top:944px;" width="13" height="12" viewBox="0 0 13 12"><rect x="5" y="1" width="7" height="6" fill="#f4f4f4" stroke="#444" stroke-width="1.3"/><rect x="1" y="5" width="7" height="6" fill="#f4f4f4" stroke="#444" stroke-width="1.3"/><rect x="3" y="7" width="3" height="2" fill="#9ab"/></svg>
<div class="a" style="left:367px;top:946px;width:12px;height:9px;background:#f4f4f4;border:1.5px solid #444;border-radius:1px"></div>
<div class="a" style="left:370px;top:949px;width:6px;height:3px;background:#9ab"></div>
<svg style="left:397px;top:944px;" width="13" height="12" viewBox="0 0 13 12"><path d="M2.5 2 L10.5 10 M10.5 2 L2.5 10" stroke="#444" stroke-width="4"/><path d="M2.5 2 L10.5 10 M10.5 2 L2.5 10" stroke="#f8f8f8" stroke-width="1.8"/></svg>
<svg style="left:272px;top:162px;overflow:hidden" width="457" height="748" viewBox="0 0 457 748"><defs><clipPath id="fpc"><rect x="0" y="1" width="457" height="747"/></clipPath></defs><g clip-path="url(#fpc)"><polygon points="82.4,315.2 122.3,331.4 122.3,369.3 178.5,424.6 141.3,462.6 141.3,540.1 116.3,540.1 116.3,549.3 82.4,549.3" fill="#00bb00"/><polygon points="82.4,315.2 105.2,292.4 122.3,331.4" fill="#00b200"/><polygon points="105.2,292.4 138.9,292.4 122.3,331.4" fill="#00ac00"/><polygon points="138.9,292.4 161.6,315.2 122.3,331.4" fill="#00a600"/><polygon points="122.3,331.4 161.6,315.2 161.6,329.6 122.3,369.3" fill="#009a00"/><polygon points="161.6,329.6 203.6,329.6 269.7,394.3 336.4,329.6 391.7,329.6 312.7,408.6 223.8,408.6 207.6,424.6 178.5,424.6 122.3,369.3" fill="#00b000"/><polygon points="203.6,292.4 269.7,292.4 269.7,394.3 203.6,329.6" fill="#00b900"/><polygon points="269.7,292.4 336.4,292.4 336.4,329.6 269.7,394.3" fill="#009800"/><polygon points="391.7,329.6 391.7,486.0 312.7,408.6" fill="#009800"/><polygon points="223.8,408.6 312.7,408.6 391.7,486.0 303.3,486.0" fill="#00a300"/><polygon points="223.8,408.6 303.3,486.0 303.3,521.4 207.6,424.6" fill="#009a00"/><polygon points="178.5,424.6 207.6,424.6 303.3,521.4 200.3,521.4 141.3,462.6" fill="#009e00"/><polygon points="141.3,462.6 200.3,521.4 200.3,540.1 141.3,540.1" fill="#009600"/><polygon points="116.3,540.1 150.5,540.1 150.5,549.3 116.3,549.3" fill="#009e00"/><path d="M82.5 315.5 L105.5 292.5" stroke="#000" stroke-width="1.1" fill="none"/><path d="M105.5 292.5 L138.5 292.5" stroke="#000" stroke-width="1.1" fill="none"/><path d="M138.5 292.5 L161.5 315.5" stroke="#000" stroke-width="1.1" fill="none"/><path d="M161.5 315.5 L161.5 329.5" stroke="#000" stroke-width="1.1" fill="none"/><path d="M161.5 329.5 L203.5 329.5" stroke="#000" stroke-width="1.1" fill="none"/><path d="M203.5 329.5 L203.5 292.5" stroke="#000" stroke-width="1.1" fill="none"/><path d="M203.5 292.5 L269.5 292.5" stroke="#000" stroke-width="1.1" fill="none"/><path d="M269.5 292.5 L336.5 292.5" stroke="#000" stroke-width="1.1" fill="none"/><path d="M336.5 292.5 L336.5 329.5" stroke="#000" stroke-width="1.1" fill="none"/><path d="M336.5 329.5 L391.5 329.5" stroke="#000" stroke-width="1.1" fill="none"/><path d="M391.5 329.5 L391.5 486.5" stroke="#000" stroke-width="1.1" fill="none"/><path d="M391.5 486.5 L303.5 486.5" stroke="#000" stroke-width="1.1" fill="none"/><path d="M303.5 486.5 L303.5 521.5" stroke="#000" stroke-width="1.1" fill="none"/><path d="M303.5 521.5 L200.5 521.5" stroke="#000" stroke-width="1.1" fill="none"/><path d="M200.5 521.5 L200.5 540.5" stroke="#000" stroke-width="1.1" fill="none"/><path d="M200.5 540.5 L150.5 540.5" stroke="#000" stroke-width="1.1" fill="none"/><path d="M150.5 540.5 L150.5 549.5" stroke="#000" stroke-width="1.1" fill="none"/><path d="M150.5 549.5 L116.5 549.5" stroke="#000" stroke-width="1.1" fill="none"/><path d="M116.5 549.5 L82.5 549.5" stroke="#000" stroke-width="1.1" fill="none"/><path d="M82.5 549.5 L82.5 315.5" stroke="#000" stroke-width="1.1" fill="none"/><path d="M82.5 315.5 L122.5 331.5" stroke="#000" stroke-width="1.1" fill="none"/><path d="M105.5 292.5 L122.5 331.5" stroke="#000" stroke-width="1.1" fill="none"/><path d="M138.5 292.5 L122.5 331.5" stroke="#000" stroke-width="1.1" fill="none"/><path d="M161.5 315.5 L122.5 331.5" stroke="#000" stroke-width="1.1" fill="none"/><path d="M122.5 331.5 L122.5 369.5" stroke="#000" stroke-width="1.1" fill="none"/><path d="M122.5 369.5 L161.5 329.5" stroke="#000" stroke-width="1.1" fill="none"/><path d="M122.5 369.5 L178.5 424.5" stroke="#000" stroke-width="1.1" fill="none"/><path d="M178.5 424.5 L207.5 424.5" stroke="#000" stroke-width="1.1" fill="none"/><path d="M178.5 424.5 L141.5 462.5" stroke="#000" stroke-width="1.1" fill="none"/><path d="M141.5 462.5 L141.5 540.5" stroke="#000" stroke-width="1.1" fill="none"/><path d="M141.5 540.5 L116.5 540.5" stroke="#000" stroke-width="1.1" fill="none"/><path d="M116.5 540.5 L116.5 549.5" stroke="#000" stroke-width="1.1" fill="none"/><path d="M141.5 462.5 L200.5 521.5" stroke="#000" stroke-width="1.1" fill="none"/><path d="M207.5 424.5 L303.5 521.5" stroke="#000" stroke-width="1.1" fill="none"/><path d="M223.5 408.5 L303.5 486.5" stroke="#000" stroke-width="1.1" fill="none"/><path d="M223.5 408.5 L207.5 424.5" stroke="#000" stroke-width="1.1" fill="none"/><path d="M223.5 408.5 L312.5 408.5" stroke="#000" stroke-width="1.1" fill="none"/><path d="M312.5 408.5 L391.5 329.5" stroke="#000" stroke-width="1.1" fill="none"/><path d="M312.5 408.5 L391.5 486.5" stroke="#000" stroke-width="1.1" fill="none"/><path d="M203.5 329.5 L269.5 394.5" stroke="#000" stroke-width="1.1" fill="none"/><path d="M269.5 292.5 L269.5 394.5" stroke="#000" stroke-width="1.1" fill="none"/><path d="M269.5 394.5 L336.5 329.5" stroke="#000" stroke-width="1.1" fill="none"/><path d="M116.5 540.5 L150.5 540.5" stroke="#000" stroke-width="1.1" fill="none"/><g stroke="#6e6e6e" stroke-width="1" fill="none"><path d="M81.5 2.5 L104.5 -19.5"/><path d="M104.5 -19.5 L138.5 -19.5"/><path d="M138.5 -19.5 L160.5 2.5"/><path d="M160.5 2.5 L160.5 17.5"/><path d="M160.5 17.5 L202.5 17.5"/><path d="M202.5 17.5 L202.5 -19.5"/><path d="M202.5 -19.5 L269.5 -19.5"/><path d="M269.5 -19.5 L335.5 -19.5"/><path d="M335.5 -19.5 L335.5 17.5"/><path d="M335.5 17.5 L391.5 17.5"/><path d="M391.5 17.5 L391.5 173.5"/><path d="M391.5 173.5 L302.5 173.5"/><path d="M302.5 173.5 L302.5 208.5"/><path d="M302.5 208.5 L199.5 208.5"/><path d="M199.5 208.5 L199.5 227.5"/><path d="M199.5 227.5 L149.5 227.5"/><path d="M149.5 227.5 L149.5 236.5"/><path d="M149.5 236.5 L115.5 236.5"/><path d="M115.5 236.5 L81.5 236.5"/><path d="M81.5 236.5 L81.5 2.5"/><path d="M81.5 2.5 L121.5 18.5"/><path d="M104.5 -19.5 L121.5 18.5"/><path d="M138.5 -19.5 L121.5 18.5"/><path d="M160.5 2.5 L121.5 18.5"/><path d="M121.5 18.5 L121.5 56.5"/><path d="M121.5 56.5 L160.5 17.5"/><path d="M121.5 56.5 L177.5 112.5"/><path d="M177.5 112.5 L206.5 112.5"/><path d="M177.5 112.5 L140.5 150.5"/><path d="M140.5 150.5 L140.5 227.5"/><path d="M140.5 227.5 L115.5 227.5"/><path d="M115.5 227.5 L115.5 236.5"/><path d="M140.5 150.5 L199.5 208.5"/><path d="M206.5 112.5 L302.5 208.5"/><path d="M222.5 95.5 L302.5 173.5"/><path d="M222.5 95.5 L206.5 112.5"/><path d="M309.5 92.5 L391.5 17.5"/><path d="M309.5 92.5 L391.5 173.5"/><path d="M269.5 -19.5 L269.5 81.5"/><path d="M269.5 81.5 L335.5 17.5"/><path d="M115.5 227.5 L149.5 227.5"/><path d="M202.5 17.5 L275.5 95.5"/><path d="M222.5 95.5 L275.5 95.5"/><path d="M269.5 81.5 L277.5 92.5"/><path d="M277.5 92.5 L309.5 92.5"/></g><g stroke="#333" stroke-width="1.25" stroke-dasharray="4 2.5" fill="none"><path d="M87.5 3.5 L87.5 228.5"/><path d="M91.5 8.5 L91.5 225.5"/><path d="M87.5 228.5 L143.5 228.5"/><path d="M91.5 231.5 L141.5 231.5"/><path d="M160.5 22.5 L385.5 22.5"/><path d="M152.5 26.5 L382.5 26.5"/><path d="M385.5 22.5 L385.5 168.5"/><path d="M382.5 26.5 L382.5 165.5"/><path d="M193.5 168.5 L385.5 168.5"/><path d="M158.5 165.5 L382.5 165.5"/><path d="M151.5 6.5 L151.5 70.5"/><path d="M153.5 6.5 L153.5 70.5"/><path d="M153.5 54.5 L223.5 54.5"/><path d="M222.5 26.5 L222.5 54.5"/><path d="M186.5 26.5 L186.5 54.5"/><path d="M188.5 26.5 L188.5 54.5"/><path d="M91.5 70.5 L179.5 70.5"/><path d="M179.5 70.5 L179.5 133.5"/><path d="M91.5 97.5 L159.5 97.5"/><path d="M123.5 70.5 L123.5 97.5"/><path d="M139.5 70.5 L139.5 97.5"/><path d="M158.5 70.5 L158.5 133.5"/><path d="M160.5 70.5 L160.5 133.5"/><path d="M91.5 133.5 L223.5 133.5"/><path d="M222.5 133.5 L222.5 165.5"/><path d="M91.5 154.5 L125.5 154.5"/><path d="M115.5 154.5 L115.5 171.5"/><path d="M125.5 154.5 L125.5 171.5"/><path d="M91.5 171.5 L141.5 171.5"/><path d="M141.5 171.5 L159.5 166.5"/><path d="M158.5 148.5 L191.5 148.5"/><path d="M158.5 148.5 L158.5 165.5"/><path d="M191.5 148.5 L191.5 165.5"/><path d="M168.5 148.5 L168.5 165.5"/><path d="M191.5 166.5 L191.5 221.5"/><path d="M193.5 168.5 L193.5 221.5"/><path d="M119.5 220.5 L193.5 220.5"/><path d="M119.5 222.5 L193.5 222.5"/><path d="M140.5 149.5 L140.5 228.5"/><path d="M290.5 26.5 L290.5 166.5"/><path d="M320.5 26.5 L320.5 71.5"/><path d="M290.5 71.5 L382.5 71.5"/><path d="M292.5 73.5 L382.5 73.5"/><path d="M223.5 26.5 L223.5 43.5"/></g><path d="M124.5 154.5 L135 144.5 V124 L144 115.5 H151" stroke="#6a6a6a" stroke-width="2.4" fill="none" stroke-dasharray="7 3"/><path d="M124.5 154.5 L135 144.5 V124 L144 115.5 H151" stroke="#fff" stroke-width="0.8" fill="none"/><circle cx="302" cy="49.5" r="8.3" fill="none" stroke="#0000ff" stroke-width="1.2"/><path d="M295 55 L302 62 L309 55 Z" fill="#0000ff"/><path d="M294 57 L310 42" stroke="#333" stroke-width="0.8"/><text x="284" y="69" font-size="6.5" fill="#3030ff" font-family="Liberation Sans" textLength="35" lengthAdjust="spacingAndGlyphs">Al&#231;. Posterior</text><path d="M185.0 -4.0 L195.2 8.1" stroke="#ff0000" stroke-width="3.2" stroke-linecap="round"/><polygon points="201.0,15.0 191.4,11.3 199.0,4.9" fill="#ff0000"/><path d="M251.0 35.0 L264.4 69.7" stroke="#ff0000" stroke-width="3.2" stroke-linecap="round"/><polygon points="268.0,79.0 259.7,71.5 269.1,67.9" fill="#ff0000"/><path d="M392.0 -4.0 L388.0 5.6" stroke="#ff0000" stroke-width="3.2" stroke-linecap="round"/><polygon points="385.0,13.0 383.9,3.9 392.2,7.3" fill="#ff0000"/></g></svg>
<svg style="left:764px;top:162px;" width="457" height="748" viewBox="0 0 457 748"><defs><clipPath id="v3c"><rect x="0" y="1" width="457" height="747"/></clipPath></defs><g clip-path="url(#v3c)"><polygon points="314.1,253.7 331.9,255.8 345.2,258.2 343.8,251.3 384.5,257.8 448.3,464.0 394.7,440.9 385.2,409.8 300.5,347.3 335.3,321.4" fill="#007f00"/><polygon points="241.7,289.2 314.1,253.7 335.3,321.4 246.5,305.2" fill="#00a600"/><polygon points="331.9,255.8 343.2,250.3 345.2,258.2" fill="#00a600"/><polygon points="121.7,325.7 246.5,305.2 335.3,321.4 300.5,347.3 265.5,352.8" fill="#007f00"/><polygon points="121.7,325.7 265.5,352.8 249.5,377.6 130.4,357.1" fill="#00a600"/><polygon points="21.9,374.7 130.4,357.1 249.5,377.6 141.0,395.3" fill="#007f00"/><polygon points="21.9,374.7 141.0,395.3 64.3,513.2" fill="#00a300"/><polygon points="141.0,395.3 249.5,377.6 265.5,352.8 300.5,347.3 385.2,409.8 347.4,468.5 296.9,476.0 196.4,404.2 133.5,502.6 64.3,513.2" fill="#00a900"/><polygon points="196.4,404.2 224.7,494.3 143.4,535.6 133.5,502.6" fill="#00a600"/><polygon points="196.4,404.2 296.9,476.0 305.6,509.2 224.7,494.3" fill="#007f00"/><polygon points="347.4,468.5 385.2,409.8 394.7,440.9 351.9,480.9" fill="#00a200"/><polygon points="351.9,480.9 394.7,440.9 385.2,496.1" fill="#00b400"/><polygon points="394.7,440.9 426.3,489.4 385.2,496.1" fill="#00aa00"/><polygon points="394.7,440.9 448.3,464.0 426.3,489.4" fill="#009400"/><path d="M314.1 253.7 L331.9 255.8 M331.9 255.8 L343.2 250.3 M343.2 250.3 L345.2 258.2 M331.9 255.8 L345.2 258.2 M343.8 251.3 L384.5 257.8 M384.5 257.8 L448.3 464.0 M448.3 464.0 L426.3 489.4 M426.3 489.4 L385.2 496.1 M385.2 496.1 L351.9 480.9 M351.9 480.9 L347.4 468.5 M347.4 468.5 L296.9 476.0 M296.9 476.0 L305.6 509.2 M305.6 509.2 L224.7 494.3 M224.7 494.3 L143.4 535.6 M143.4 535.6 L133.5 502.6 M133.5 502.6 L64.3 513.2 M64.3 513.2 L21.9 374.7 M21.9 374.7 L130.4 357.1 M130.4 357.1 L121.7 325.7 M121.7 325.7 L246.5 305.2 M246.5 305.2 L241.7 289.2 M241.7 289.2 L314.1 253.7 M314.1 253.7 L335.3 321.4 M246.5 305.2 L335.3 321.4 M335.3 321.4 L300.5 347.3 M300.5 347.3 L265.5 352.8 M265.5 352.8 L121.7 325.7 M265.5 352.8 L249.5 377.6 M249.5 377.6 L130.4 357.1 M249.5 377.6 L141.0 395.3 M141.0 395.3 L21.9 374.7 M141.0 395.3 L64.3 513.2 M196.4 404.2 L133.5 502.6 M196.4 404.2 L224.7 494.3 M196.4 404.2 L296.9 476.0 M300.5 347.3 L385.2 409.8 M385.2 409.8 L394.7 440.9 M394.7 440.9 L448.3 464.0 M394.7 440.9 L426.3 489.4 M394.7 440.9 L385.2 496.1 M394.7 440.9 L351.9 480.9 M385.2 409.8 L347.4 468.5 " stroke="#000" stroke-width="1.1" fill="none" stroke-linejoin="round"/><path d="M133.5 503.6 L64.3 514.2 M143.4 536.6 L224.7 495.3" stroke="#000" stroke-width="1" fill="none"/><defs><radialGradient id="rg" cx="50%" cy="50%" r="50%"><stop offset="0.7" stop-color="#ffffff"/><stop offset="1" stop-color="#ececee"/></radialGradient>
<radialGradient id="sh" cx="50%" cy="50%" r="50%"><stop offset="0" stop-color="#000" stop-opacity="0.18"/><stop offset="1" stop-color="#000" stop-opacity="0"/></radialGradient></defs>
<g transform="translate(366.4000000000001 117.5) rotate(-12)">
<ellipse cx="0" cy="0" rx="61" ry="44" fill="#dee0e4"/>
<ellipse cx="0" cy="0" rx="48" ry="33" fill="url(#rg)" stroke="#b8bbc0" stroke-width="1.8"/>
</g>
<ellipse cx="364" cy="108" rx="30" ry="26" fill="url(#sh)"/>
<g font-family="Liberation Sans" font-weight="bold" fill="#a4a7ae" text-anchor="middle" font-size="17">
<text x="307" y="123" transform="rotate(172 307 117)">E</text>
<text x="422" y="106" transform="rotate(160 422 100)">W</text>
<text x="381" y="162" transform="rotate(200 381 156)">N</text>
</g>
<polygon points="337,60.5 383,54.5 396,87 348,94" fill="#eceef2" stroke="#9a9ca2" stroke-width="0.7" stroke-dasharray="3 1.5"/>
<polygon points="348,94 396,87 394,119.5 348,127.5" fill="#e8eaee" stroke="#9a9ca2" stroke-width="0.7" stroke-dasharray="3 1.5"/>
<polygon points="337,60.5 348,94 348,127.5 340,97" fill="#dcdee2" stroke="#9a9ca2" stroke-width="0.7" stroke-dasharray="2 1"/>
<path d="M356 89 L386 85" stroke="#e2e4e8" stroke-width="6"/>
<text x="366" y="78" font-size="11" font-weight="bold" fill="#9a9ca2" font-family="Liberation Sans" text-anchor="middle" transform="rotate(190 366 74)">TOP</text>
<text x="371" y="113" font-size="10.5" font-weight="bold" fill="#9a9ca2" font-family="Liberation Sans" text-anchor="middle" transform="rotate(-9 371 109)">BACK</text>
<defs><radialGradient id="wg" cx="40%" cy="35%" r="70%"><stop offset="0" stop-color="#fbfbfb"/><stop offset="1" stop-color="#e6e6e6"/></radialGradient></defs>
<path d="M64.89999999999998 620.6 L117 626.6 Q125 626.6 125 634.1 L125 734 Q125 742 117 742 L64.89999999999998 742" fill="#f1f1f1" stroke="#d4d4d4" stroke-width="1"/>
<circle cx="64.89999999999998" cy="684.1" r="63.3" fill="url(#wg)" stroke="#b4b4b4" stroke-width="1.2"/>
<circle cx="64.89999999999998" cy="684.1" r="38.4" fill="#eeeeee" stroke="#a0a0a0" stroke-width="1.2"/>
<path d="M64.89999999999998 645.7 V722.5 M26.49999999999998 684.1 H103.29999999999998" stroke="#a0a0a0" stroke-width="1"/>
<path d="M37.699999999999974 656.9 L20.09999999999998 639.3000000000001 M92.09999999999998 656.9 L109.69999999999997 639.3000000000001 M37.699999999999974 711.3000000000001 L20.09999999999998 728.9 M92.09999999999998 711.3000000000001 L109.69999999999997 728.9" stroke="#a8a8a8" stroke-width="1"/>
<g font-family="Liberation Sans" font-size="10.5" fill="#7e7e7e" text-anchor="middle" stroke="#7e7e7e" stroke-width="0.3">
<text x="64.89999999999998" y="638.1">ZOOM</text>
<text x="64.89999999999998" y="738.1">PAN</text>
<text x="14.899999999999977" y="688.1" transform="rotate(-90 14.899999999999977 684.1)">ORBIT</text>
<text x="114.89999999999998" y="688.1" transform="rotate(90 114.89999999999998 684.1)">REWIND</text>
</g>
<defs><path id="arcT" d="M34.89999999999998 684.1 A30 30 0 0 1 94.89999999999998 684.1"/><path id="arcB" d="M31.899999999999977 684.1 A33 33 0 0 0 97.89999999999998 684.1"/></defs>
<g font-family="Liberation Sans" font-size="8.5" fill="#7e7e7e" stroke="#7e7e7e" stroke-width="0.2" text-anchor="middle">
<text><textPath href="#arcT" startOffset="25%">CENTER</textPath></text>
<text><textPath href="#arcT" startOffset="75%">WALK</textPath></text>
<text><textPath href="#arcB" startOffset="25%">LOOK</textPath></text>
<text><textPath href="#arcB" startOffset="72%">UP/DOWN</textPath></text>
</g>
<path d="M113 630 L119 636 M119 630 L113 636" stroke="#909090" stroke-width="1"/>
<circle cx="116" cy="735" r="5.3" fill="#f4f4f4" stroke="#b0b0b0"/>
<path d="M113 733.5 H119 L116 737 Z" fill="#909090"/>
</g></svg>
</body></html>
